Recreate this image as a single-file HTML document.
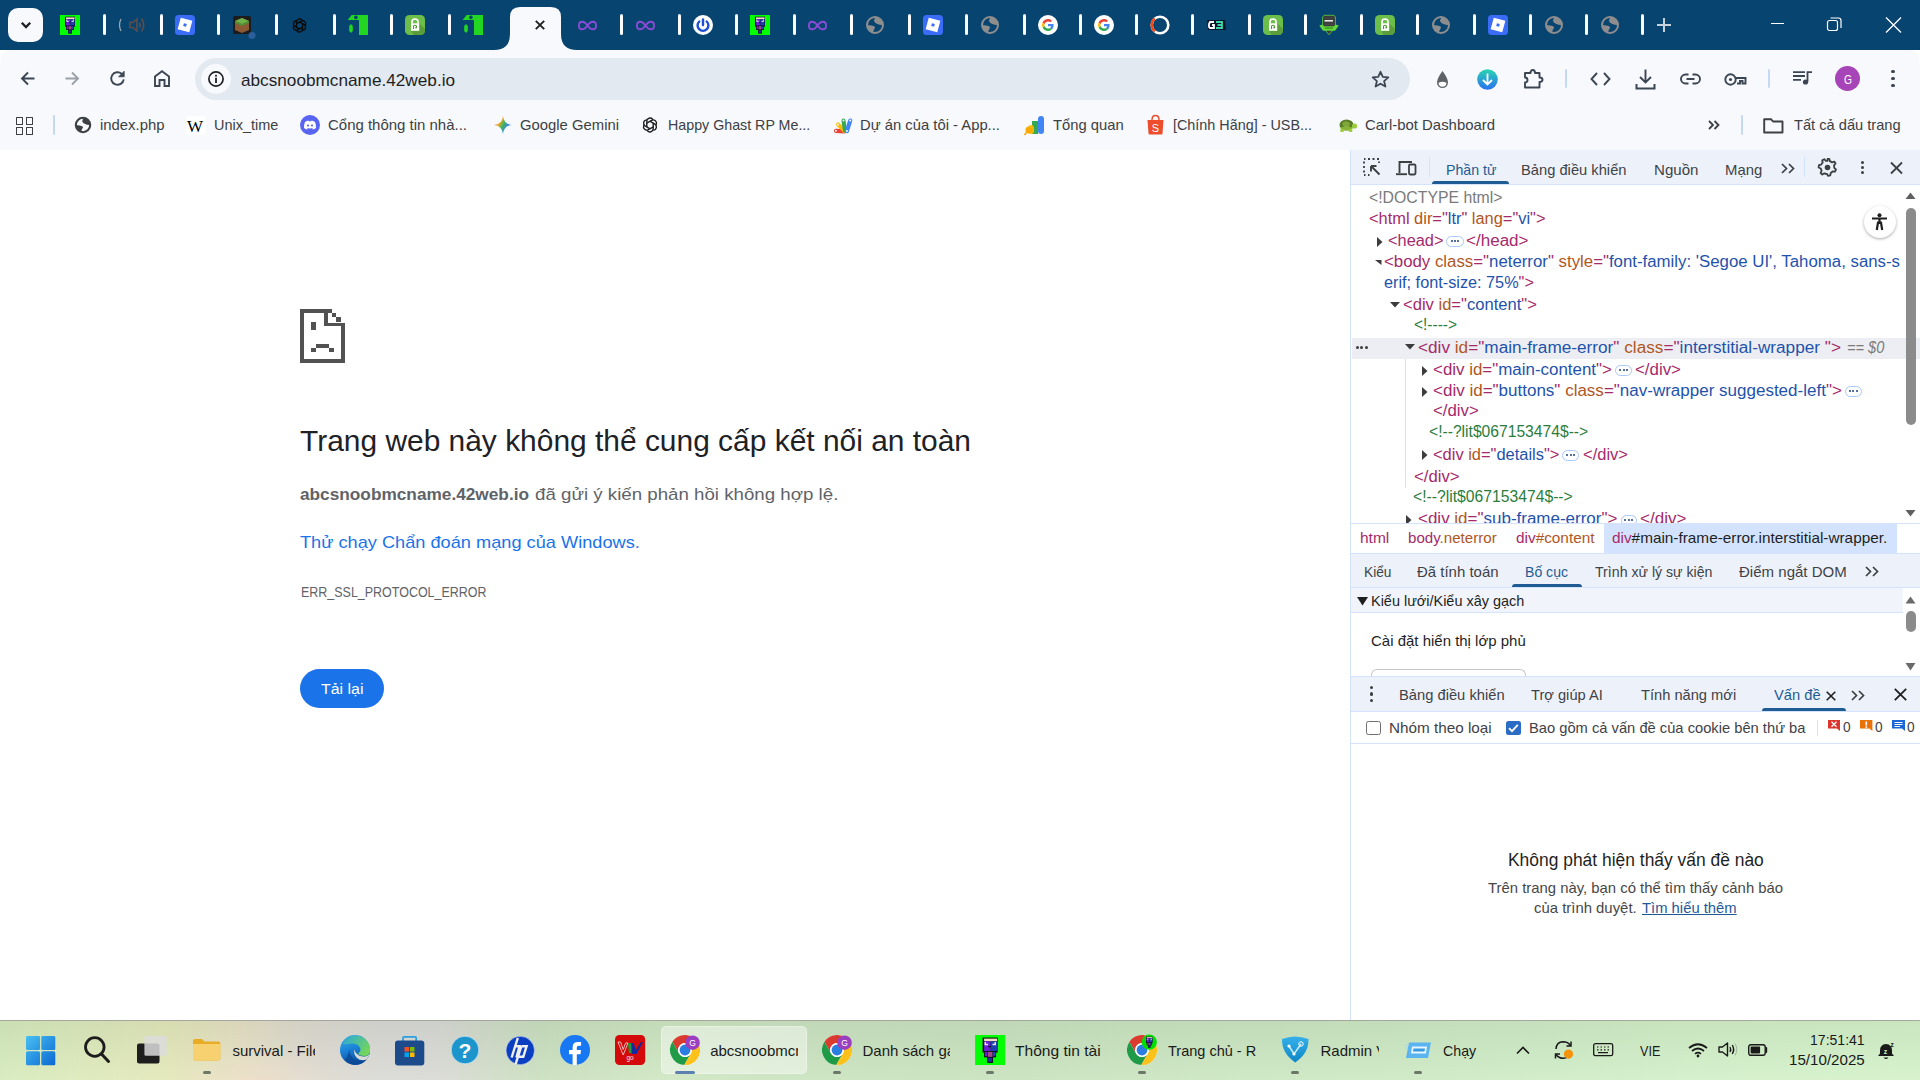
<!DOCTYPE html><html><head><meta charset="utf-8"><title>Chrome</title><style>
html,body{margin:0;padding:0;width:1920px;height:1080px;overflow:hidden;background:#fff;font-family:"Liberation Sans",sans-serif;}
.t{position:absolute;white-space:pre;line-height:1;transform-origin:0 0;}
.r{position:absolute;display:block;}
</style></head><body>
<div class="r" style="left:0px;top:0px;width:1920px;height:50px;background:#084470;"></div>
<div class="r" style="left:8px;top:8px;width:35px;height:34px;background:#f7f9fd;border-radius:10px;"></div>
<svg class="r" style="left:18px;top:17px;" width="16" height="16" viewBox="0 0 16 16"><path d="M3.8 5.8 L8 10 L12.2 5.8" fill="none" stroke="#1f1f1f" stroke-width="2.3"/></svg>
<div class="r" style="left:102.9px;top:14px;width:3px;height:21px;background:#fbfcfe;border-radius:1.5px;"></div>
<div class="r" style="left:159.9px;top:14px;width:3px;height:21px;background:#fbfcfe;border-radius:1.5px;"></div>
<div class="r" style="left:217.4px;top:14px;width:3px;height:21px;background:#fbfcfe;border-radius:1.5px;"></div>
<div class="r" style="left:274.6px;top:14px;width:3px;height:21px;background:#fbfcfe;border-radius:1.5px;"></div>
<div class="r" style="left:333.0px;top:14px;width:3px;height:21px;background:#fbfcfe;border-radius:1.5px;"></div>
<div class="r" style="left:389.9px;top:14px;width:3px;height:21px;background:#fbfcfe;border-radius:1.5px;"></div>
<div class="r" style="left:447.8px;top:14px;width:3px;height:21px;background:#fbfcfe;border-radius:1.5px;"></div>
<div class="r" style="left:620.0px;top:14px;width:3px;height:21px;background:#fbfcfe;border-radius:1.5px;"></div>
<div class="r" style="left:678.0px;top:14px;width:3px;height:21px;background:#fbfcfe;border-radius:1.5px;"></div>
<div class="r" style="left:735.0px;top:14px;width:3px;height:21px;background:#fbfcfe;border-radius:1.5px;"></div>
<div class="r" style="left:792.5px;top:14px;width:3px;height:21px;background:#fbfcfe;border-radius:1.5px;"></div>
<div class="r" style="left:849.5px;top:14px;width:3px;height:21px;background:#fbfcfe;border-radius:1.5px;"></div>
<div class="r" style="left:907.5px;top:14px;width:3px;height:21px;background:#fbfcfe;border-radius:1.5px;"></div>
<div class="r" style="left:964.5px;top:14px;width:3px;height:21px;background:#fbfcfe;border-radius:1.5px;"></div>
<div class="r" style="left:1022.5px;top:14px;width:3px;height:21px;background:#fbfcfe;border-radius:1.5px;"></div>
<div class="r" style="left:1078.5px;top:14px;width:3px;height:21px;background:#fbfcfe;border-radius:1.5px;"></div>
<div class="r" style="left:1134.5px;top:14px;width:3px;height:21px;background:#fbfcfe;border-radius:1.5px;"></div>
<div class="r" style="left:1190.5px;top:14px;width:3px;height:21px;background:#fbfcfe;border-radius:1.5px;"></div>
<div class="r" style="left:1247.5px;top:14px;width:3px;height:21px;background:#fbfcfe;border-radius:1.5px;"></div>
<div class="r" style="left:1303.5px;top:14px;width:3px;height:21px;background:#fbfcfe;border-radius:1.5px;"></div>
<div class="r" style="left:1359.5px;top:14px;width:3px;height:21px;background:#fbfcfe;border-radius:1.5px;"></div>
<div class="r" style="left:1415.5px;top:14px;width:3px;height:21px;background:#fbfcfe;border-radius:1.5px;"></div>
<div class="r" style="left:1472.5px;top:14px;width:3px;height:21px;background:#fbfcfe;border-radius:1.5px;"></div>
<div class="r" style="left:1528.5px;top:14px;width:3px;height:21px;background:#fbfcfe;border-radius:1.5px;"></div>
<div class="r" style="left:1584.5px;top:14px;width:3px;height:21px;background:#fbfcfe;border-radius:1.5px;"></div>
<div class="r" style="left:1640.5px;top:14px;width:3px;height:21px;background:#fbfcfe;border-radius:1.5px;"></div>
<svg class="r" style="left:494px;top:7px" width="84" height="43" viewBox="0 0 84 43"><path d="M0 43 Q16 43 16 27 L16 10 Q16 0 26 0 L57 0 Q67 0 67 10 L67 27 Q67 43 83 43 Z" fill="#f7f9fd"/></svg>
<svg class="r" style="left:535px;top:20px;" width="10" height="10" viewBox="0 0 10 10"><path d="M0.8 0.8 L9.2 9.2 M9.2 0.8 L0.8 9.2" stroke="#1f1f1f" stroke-width="1.9"/></svg>
<svg class="r" style="left:60.0px;top:15.0px;overflow:visible" width="20" height="20" viewBox="0 0 20 20"><rect x="0" y="0" width="20" height="20" fill="#00ff00"/><rect x="5" y="1.7" width="10" height="10" fill="#0a0618"/><rect x="6" y="2.4" width="8.6" height="1.8" fill="#f2dcc4"/><rect x="6" y="4.2" width="4.3" height="6.5" fill="#6d1fd8"/><rect x="10.3" y="4.2" width="4.3" height="6.5" fill="#1f3fb0"/><path d="M6.8 4.6 V6.4 H8.6 M11.6 6.4 H13.4 V4.6" fill="none" stroke="#e8e4d8" stroke-width="1"/><rect x="8.8" y="7.4" width="1.6" height="0.8" fill="#0a0618"/><rect x="6" y="10.7" width="8" height="4.2" fill="#0a0618"/><rect x="6.5" y="11.2" width="1.8" height="3" fill="#7020d0"/><rect x="8.6" y="11.2" width="3" height="3.5" fill="#a04a86"/><rect x="11.8" y="11.2" width="1.8" height="3" fill="#2040b8"/><rect x="8" y="14.6" width="4" height="4" fill="#0a0618"/><rect x="8.6" y="15.2" width="2.8" height="2.6" fill="#1f2f9a"/></svg>
<svg class="r" style="left:126.9px;top:15.0px;overflow:visible" width="20" height="20" viewBox="0 0 20 20"><path d="M-6 4 Q-9 10 -6 16" fill="none" stroke="#9aa5b0" stroke-width="1.3"/><path d="M3 7.5 H6 L10 4 V16 L6 12.5 H3 Z" fill="none" stroke="#5e4e4c" stroke-width="1.6"/><path d="M12.5 7.5 Q14 10 12.5 12.5" fill="#5e4e4c" stroke="#5e4e4c" stroke-width="1.5"/><path d="M14.5 3.5 Q19 10 14.5 16.5" fill="none" stroke="#5e4e4c" stroke-width="1.6"/></svg>
<svg class="r" style="left:174.9px;top:15.0px;overflow:visible" width="20" height="20" viewBox="0 0 20 20"><rect x="0" y="0" width="20" height="20" rx="3.5" fill="#3b6cf7"/><g transform="rotate(15 10 10)"><rect x="4" y="4" width="12" height="12" fill="#ffffff"/><rect x="8.5" y="8.5" width="3" height="3" fill="#3b6cf7"/></g></svg>
<svg class="r" style="left:232.4px;top:15.0px;overflow:visible" width="20" height="20" viewBox="0 0 20 20"><rect x="1" y="1" width="18" height="18" rx="1.5" fill="#1c1c1c"/><path d="M3 6 L10 3 L17 6 L17 15 L10 18 L3 15 Z" fill="#8b5a34"/><path d="M3 6 L10 3 L17 6 L10 9 Z" fill="#6db34a"/><path d="M3 6 L10 9 L10 11 L3 8 Z M17 6 L10 9 L10 11 L17 8Z" fill="#4f8f35"/><circle cx="20" cy="20.5" r="3.6" fill="#2a5f99"/></svg>
<svg class="r" style="left:290.1px;top:15.5px;overflow:visible" width="19" height="19" viewBox="0 0 20 20"><g fill="none" stroke="#0b0b0b" stroke-width="1.5" stroke-linecap="round"><path d="M6.8 11.5 V6.2 A3.3 3.3 0 0 1 12.6 4.2" transform="rotate(0 10 10)"/><path d="M6.8 11.5 V6.2 A3.3 3.3 0 0 1 12.6 4.2" transform="rotate(60 10 10)"/><path d="M6.8 11.5 V6.2 A3.3 3.3 0 0 1 12.6 4.2" transform="rotate(120 10 10)"/><path d="M6.8 11.5 V6.2 A3.3 3.3 0 0 1 12.6 4.2" transform="rotate(180 10 10)"/><path d="M6.8 11.5 V6.2 A3.3 3.3 0 0 1 12.6 4.2" transform="rotate(240 10 10)"/><path d="M6.8 11.5 V6.2 A3.3 3.3 0 0 1 12.6 4.2" transform="rotate(300 10 10)"/></g></svg>
<svg class="r" style="left:348.0px;top:15.0px;overflow:visible" width="20" height="20" viewBox="0 0 20 20"><path d="M11 0 H20 V20 H11 V5 H0 V4.6 L3.7 0 Z" fill="#22d622"/><circle cx="7.9" cy="2.4" r="1.8" fill="#084470"/><path d="M1.2 11 L3 9 L4.8 11 V16 L3 18 L1.2 16 Z" fill="#22d622"/></svg>
<svg class="r" style="left:404.9px;top:15.0px;overflow:visible" width="20" height="20" viewBox="0 0 20 20"><defs><clipPath id="lkc"><rect x="0" y="0" width="20" height="20" rx="4.5"/></clipPath></defs><rect x="0" y="0" width="20" height="20" rx="4.5" fill="#6cbd4a"/><path d="M14 8.3 L22 16 L22 22 L10 22 L6 15.8 Z" fill="#5a9e3c" clip-path="url(#lkc)"/><path d="M7 8.5 V6.8 Q7 4 10 4 Q13 4 13 6.8 V8.5" fill="none" stroke="#fff" stroke-width="1.7"/><rect x="6" y="8.3" width="8.2" height="7.5" fill="#ffffff"/><path d="M8.5 14 V11.6 Q8.5 10.3 10 10.3 Q11.5 10.3 11.5 11.6 V12.8 H10" fill="none" stroke="#4a9a30" stroke-width="1.1"/></svg>
<svg class="r" style="left:462.8px;top:15.0px;overflow:visible" width="20" height="20" viewBox="0 0 20 20"><path d="M11 0 H20 V20 H11 V5 H0 V4.6 L3.7 0 Z" fill="#22d622"/><circle cx="7.9" cy="2.4" r="1.8" fill="#084470"/><path d="M1.2 11 L3 9 L4.8 11 V16 L3 18 L1.2 16 Z" fill="#22d622"/></svg>
<svg class="r" style="left:578.0px;top:15.5px;overflow:visible" width="19" height="19" viewBox="0 0 20 20"><path d="M10 10 C8 7 6 6 4.3 6 C2.3 6 1 7.8 1 10 C1 12.2 2.3 14 4.3 14 C6 14 8 13 10 10 C12 7 14 6 15.7 6 C17.7 6 19 7.8 19 10 C19 12.2 17.7 14 15.7 14 C14 14 12 13 10 10 Z" fill="none" stroke="#8a4cd6" stroke-width="2"/></svg>
<svg class="r" style="left:635.5px;top:15.5px;overflow:visible" width="19" height="19" viewBox="0 0 20 20"><path d="M10 10 C8 7 6 6 4.3 6 C2.3 6 1 7.8 1 10 C1 12.2 2.3 14 4.3 14 C6 14 8 13 10 10 C12 7 14 6 15.7 6 C17.7 6 19 7.8 19 10 C19 12.2 17.7 14 15.7 14 C14 14 12 13 10 10 Z" fill="none" stroke="#8a4cd6" stroke-width="2"/></svg>
<svg class="r" style="left:693.0px;top:15.0px;overflow:visible" width="20" height="20" viewBox="0 0 20 20"><circle cx="10" cy="10" r="10" fill="#ffffff"/><path d="M6.3 6.5 A5.4 5.4 0 1 0 13.7 6.5" fill="none" stroke="#1a4fd6" stroke-width="2.4" stroke-linecap="round"/><path d="M10 4.5 V10" stroke="#1a4fd6" stroke-width="2.4" stroke-linecap="round"/></svg>
<svg class="r" style="left:750.0px;top:15.0px;overflow:visible" width="20" height="20" viewBox="0 0 20 20"><rect x="0" y="0" width="20" height="20" fill="#00ff00"/><rect x="5" y="1.7" width="10" height="10" fill="#0a0618"/><rect x="6" y="2.4" width="8.6" height="1.8" fill="#f2dcc4"/><rect x="6" y="4.2" width="4.3" height="6.5" fill="#6d1fd8"/><rect x="10.3" y="4.2" width="4.3" height="6.5" fill="#1f3fb0"/><path d="M6.8 4.6 V6.4 H8.6 M11.6 6.4 H13.4 V4.6" fill="none" stroke="#e8e4d8" stroke-width="1"/><rect x="8.8" y="7.4" width="1.6" height="0.8" fill="#0a0618"/><rect x="6" y="10.7" width="8" height="4.2" fill="#0a0618"/><rect x="6.5" y="11.2" width="1.8" height="3" fill="#7020d0"/><rect x="8.6" y="11.2" width="3" height="3.5" fill="#a04a86"/><rect x="11.8" y="11.2" width="1.8" height="3" fill="#2040b8"/><rect x="8" y="14.6" width="4" height="4" fill="#0a0618"/><rect x="8.6" y="15.2" width="2.8" height="2.6" fill="#1f2f9a"/></svg>
<svg class="r" style="left:808.0px;top:15.5px;overflow:visible" width="19" height="19" viewBox="0 0 20 20"><path d="M10 10 C8 7 6 6 4.3 6 C2.3 6 1 7.8 1 10 C1 12.2 2.3 14 4.3 14 C6 14 8 13 10 10 C12 7 14 6 15.7 6 C17.7 6 19 7.8 19 10 C19 12.2 17.7 14 15.7 14 C14 14 12 13 10 10 Z" fill="none" stroke="#8a4cd6" stroke-width="2"/></svg>
<svg class="r" style="left:864.5px;top:15.0px;overflow:visible" width="20" height="20" viewBox="0 0 20 20"><g transform="translate(1 1)"><circle cx="9" cy="9" r="8" fill="none" stroke="#8e8e8e" stroke-width="2"/><path d="M9.5 1.5 Q7.5 3.8 8.3 5.8 Q9.5 7.6 12 8.2 Q14 9.2 16.8 9 A8 8 0 0 0 9.5 1.5Z" fill="#8e8e8e"/><path d="M1.2 9 Q5.5 9.2 8.3 10.3 Q9.8 11.8 8.2 13.3 Q7 14.5 7.3 16.7 A8 8 0 0 1 1.2 9Z" fill="#8e8e8e"/></g></svg>
<svg class="r" style="left:922.5px;top:15.0px;overflow:visible" width="20" height="20" viewBox="0 0 20 20"><rect x="0" y="0" width="20" height="20" rx="3.5" fill="#3b6cf7"/><g transform="rotate(15 10 10)"><rect x="4" y="4" width="12" height="12" fill="#ffffff"/><rect x="8.5" y="8.5" width="3" height="3" fill="#3b6cf7"/></g></svg>
<svg class="r" style="left:979.5px;top:15.0px;overflow:visible" width="20" height="20" viewBox="0 0 20 20"><g transform="translate(1 1)"><circle cx="9" cy="9" r="8" fill="none" stroke="#8e8e8e" stroke-width="2"/><path d="M9.5 1.5 Q7.5 3.8 8.3 5.8 Q9.5 7.6 12 8.2 Q14 9.2 16.8 9 A8 8 0 0 0 9.5 1.5Z" fill="#8e8e8e"/><path d="M1.2 9 Q5.5 9.2 8.3 10.3 Q9.8 11.8 8.2 13.3 Q7 14.5 7.3 16.7 A8 8 0 0 1 1.2 9Z" fill="#8e8e8e"/></g></svg>
<svg class="r" style="left:1037.5px;top:15.0px;overflow:visible" width="20" height="20" viewBox="0 0 20 20"><circle cx="10" cy="10" r="10" fill="#ffffff"/><path d="M15.6 10.2 C15.6 9.7 15.55 9.3 15.5 8.9 H10 V11.2 H13.2 C13 12 12.6 12.6 12 13 L13.9 14.5 C15 13.5 15.6 12 15.6 10.2Z" fill="#4285f4"/><path d="M10 16 C11.6 16 13 15.4 13.9 14.5 L12 13 C11.5 13.4 10.8 13.6 10 13.6 C8.4 13.6 7.1 12.6 6.6 11.1 L4.6 12.6 C5.6 14.6 7.6 16 10 16Z" fill="#34a853"/><path d="M6.6 11.1 C6.5 10.8 6.4 10.4 6.4 10 C6.4 9.6 6.5 9.2 6.6 8.9 L4.6 7.4 C4.2 8.2 4 9.1 4 10 C4 10.9 4.2 11.8 4.6 12.6 Z" fill="#fbbc05"/><path d="M10 6.4 C10.9 6.4 11.7 6.7 12.3 7.3 L14 5.6 C13 4.6 11.6 4 10 4 C7.6 4 5.6 5.4 4.6 7.4 L6.6 8.9 C7.1 7.4 8.4 6.4 10 6.4Z" fill="#ea4335"/></svg>
<svg class="r" style="left:1093.5px;top:15.0px;overflow:visible" width="20" height="20" viewBox="0 0 20 20"><circle cx="10" cy="10" r="10" fill="#ffffff"/><path d="M15.6 10.2 C15.6 9.7 15.55 9.3 15.5 8.9 H10 V11.2 H13.2 C13 12 12.6 12.6 12 13 L13.9 14.5 C15 13.5 15.6 12 15.6 10.2Z" fill="#4285f4"/><path d="M10 16 C11.6 16 13 15.4 13.9 14.5 L12 13 C11.5 13.4 10.8 13.6 10 13.6 C8.4 13.6 7.1 12.6 6.6 11.1 L4.6 12.6 C5.6 14.6 7.6 16 10 16Z" fill="#34a853"/><path d="M6.6 11.1 C6.5 10.8 6.4 10.4 6.4 10 C6.4 9.6 6.5 9.2 6.6 8.9 L4.6 7.4 C4.2 8.2 4 9.1 4 10 C4 10.9 4.2 11.8 4.6 12.6 Z" fill="#fbbc05"/><path d="M10 6.4 C10.9 6.4 11.7 6.7 12.3 7.3 L14 5.6 C13 4.6 11.6 4 10 4 C7.6 4 5.6 5.4 4.6 7.4 L6.6 8.9 C7.1 7.4 8.4 6.4 10 6.4Z" fill="#ea4335"/></svg>
<svg class="r" style="left:1149.5px;top:15.0px;overflow:visible" width="20" height="20" viewBox="0 0 20 20"><circle cx="10" cy="10" r="8.3" fill="none" stroke="#ffffff" stroke-width="2.6"/><path d="M4.8 3.6 A8.3 8.3 0 0 0 4.8 16.4" fill="none" stroke="#f24b1a" stroke-width="2.6"/></svg>
<svg class="r" style="left:1205.5px;top:15.0px;overflow:visible" width="20" height="20" viewBox="0 0 20 20"><path d="M1 5 L19 5 L20 15 L2 15 Z" fill="#0d1530"/><path d="M8 7 H4 L3 9 V12 L4 13 H8 V10 H6" fill="none" stroke="#fff" stroke-width="1.8"/><path d="M10 7 H16 V13 H10 M11.5 10 H16" fill="none" stroke="#3dd6a6" stroke-width="1.8"/></svg>
<svg class="r" style="left:1262.5px;top:15.0px;overflow:visible" width="20" height="20" viewBox="0 0 20 20"><defs><clipPath id="lkc"><rect x="0" y="0" width="20" height="20" rx="4.5"/></clipPath></defs><rect x="0" y="0" width="20" height="20" rx="4.5" fill="#6cbd4a"/><path d="M14 8.3 L22 16 L22 22 L10 22 L6 15.8 Z" fill="#5a9e3c" clip-path="url(#lkc)"/><path d="M7 8.5 V6.8 Q7 4 10 4 Q13 4 13 6.8 V8.5" fill="none" stroke="#fff" stroke-width="1.7"/><rect x="6" y="8.3" width="8.2" height="7.5" fill="#ffffff"/><path d="M8.5 14 V11.6 Q8.5 10.3 10 10.3 Q11.5 10.3 11.5 11.6 V12.8 H10" fill="none" stroke="#4a9a30" stroke-width="1.1"/></svg>
<svg class="r" style="left:1318.5px;top:15.0px;overflow:visible" width="20" height="20" viewBox="0 0 20 20"><path d="M3.6 2 L5 0.3 H15 L16.4 2 V12 L10 19.7 L3.6 12 Z" fill="#3a3a3c" stroke="#5ad43a" stroke-width="0.8"/><rect x="5.5" y="5" width="8.5" height="1.6" fill="#e8e8e8"/><path d="M5 3 H15 M5 8 H15 M5 9.5 H15" stroke="#555" stroke-width="0.5"/><path d="M0.3 10.5 L3.6 9.5 L5 11.3 H15 L16.4 9.5 L19.7 10.5 L18 13 L16 15.8 H4 L2 13 Z" fill="#62d83a"/><rect x="6" y="12.2" width="8" height="1.6" fill="#2a7a1a" opacity="0.6"/></svg>
<svg class="r" style="left:1374.5px;top:15.0px;overflow:visible" width="20" height="20" viewBox="0 0 20 20"><defs><clipPath id="lkc"><rect x="0" y="0" width="20" height="20" rx="4.5"/></clipPath></defs><rect x="0" y="0" width="20" height="20" rx="4.5" fill="#6cbd4a"/><path d="M14 8.3 L22 16 L22 22 L10 22 L6 15.8 Z" fill="#5a9e3c" clip-path="url(#lkc)"/><path d="M7 8.5 V6.8 Q7 4 10 4 Q13 4 13 6.8 V8.5" fill="none" stroke="#fff" stroke-width="1.7"/><rect x="6" y="8.3" width="8.2" height="7.5" fill="#ffffff"/><path d="M8.5 14 V11.6 Q8.5 10.3 10 10.3 Q11.5 10.3 11.5 11.6 V12.8 H10" fill="none" stroke="#4a9a30" stroke-width="1.1"/></svg>
<svg class="r" style="left:1430.5px;top:15.0px;overflow:visible" width="20" height="20" viewBox="0 0 20 20"><g transform="translate(1 1)"><circle cx="9" cy="9" r="8" fill="none" stroke="#8e8e8e" stroke-width="2"/><path d="M9.5 1.5 Q7.5 3.8 8.3 5.8 Q9.5 7.6 12 8.2 Q14 9.2 16.8 9 A8 8 0 0 0 9.5 1.5Z" fill="#8e8e8e"/><path d="M1.2 9 Q5.5 9.2 8.3 10.3 Q9.8 11.8 8.2 13.3 Q7 14.5 7.3 16.7 A8 8 0 0 1 1.2 9Z" fill="#8e8e8e"/></g></svg>
<svg class="r" style="left:1487.5px;top:15.0px;overflow:visible" width="20" height="20" viewBox="0 0 20 20"><rect x="0" y="0" width="20" height="20" rx="3.5" fill="#3b6cf7"/><g transform="rotate(15 10 10)"><rect x="4" y="4" width="12" height="12" fill="#ffffff"/><rect x="8.5" y="8.5" width="3" height="3" fill="#3b6cf7"/></g></svg>
<svg class="r" style="left:1543.5px;top:15.0px;overflow:visible" width="20" height="20" viewBox="0 0 20 20"><g transform="translate(1 1)"><circle cx="9" cy="9" r="8" fill="none" stroke="#8e8e8e" stroke-width="2"/><path d="M9.5 1.5 Q7.5 3.8 8.3 5.8 Q9.5 7.6 12 8.2 Q14 9.2 16.8 9 A8 8 0 0 0 9.5 1.5Z" fill="#8e8e8e"/><path d="M1.2 9 Q5.5 9.2 8.3 10.3 Q9.8 11.8 8.2 13.3 Q7 14.5 7.3 16.7 A8 8 0 0 1 1.2 9Z" fill="#8e8e8e"/></g></svg>
<svg class="r" style="left:1599.5px;top:15.0px;overflow:visible" width="20" height="20" viewBox="0 0 20 20"><g transform="translate(1 1)"><circle cx="9" cy="9" r="8" fill="none" stroke="#8e8e8e" stroke-width="2"/><path d="M9.5 1.5 Q7.5 3.8 8.3 5.8 Q9.5 7.6 12 8.2 Q14 9.2 16.8 9 A8 8 0 0 0 9.5 1.5Z" fill="#8e8e8e"/><path d="M1.2 9 Q5.5 9.2 8.3 10.3 Q9.8 11.8 8.2 13.3 Q7 14.5 7.3 16.7 A8 8 0 0 1 1.2 9Z" fill="#8e8e8e"/></g></svg>
<svg class="r" style="left:1656px;top:17px;" width="16" height="16" viewBox="0 0 16 16"><path d="M8 1 V15 M1 8 H15" stroke="#c9d1db" stroke-width="2"/></svg>
<div class="r" style="left:1771px;top:23px;width:13px;height:1.3px;background:#ffffff;"></div>
<svg class="r" style="left:1826px;top:16px;" width="18" height="18" viewBox="0 0 18 18"><rect x="1.5" y="4.5" width="10" height="10" rx="2" fill="none" stroke="#fff" stroke-width="1.2"/><path d="M4.5 2 H12.5 Q15 2 15 4.5 V12" fill="none" stroke="#fff" stroke-width="1.2"/></svg>
<svg class="r" style="left:1884px;top:16px;" width="20" height="18" viewBox="0 0 20 18"><path d="M2 1.5 L17 16.5 M17 1.5 L2 16.5" stroke="#fff" stroke-width="1.3"/></svg>
<div class="r" style="left:0px;top:50px;width:1920px;height:100px;background:#f7f9fd;border-radius:10px 10px 0 0;"></div>
<div class="r" style="left:0px;top:150px;width:1920px;height:1px;background:#dde1e8;"></div>
<svg class="r" style="left:20px;top:71px;overflow:visible" width="15" height="15" viewBox="0 0 15 15"><path d="M14.5 7.5 H2 M8 1.5 L2 7.5 L8 13.5" fill="none" stroke="#3c4653" stroke-width="1.9"/></svg>
<svg class="r" style="left:65px;top:71px;overflow:visible" width="15" height="15" viewBox="0 0 15 15"><path d="M0.5 7.5 H13 M7 1.5 L13 7.5 L7 13.5" fill="none" stroke="#9ba1a8" stroke-width="1.9"/></svg>
<svg class="r" style="left:110px;top:71px;overflow:visible" width="16" height="16" viewBox="0 0 16 16"><path d="M11.80 2.89 A6.3 6.3 0 1 0 13.74 8.38" fill="none" stroke="#3c4653" stroke-width="1.9"/><path d="M14.2 0.2 V5.8 H8.6 Z" fill="#3c4653" stroke="#3c4653" stroke-width="0.8" stroke-linejoin="round"/></svg>
<svg class="r" style="left:154px;top:70px;overflow:visible" width="16" height="17" viewBox="0 0 16 17"><path d="M1 16 V6.5 L8 1.2 L15 6.5 V16 H10.5 V10 H5.5 V16 Z" fill="none" stroke="#3c4653" stroke-width="1.9" stroke-linejoin="miter"/></svg>
<div class="r" style="left:195px;top:58px;width:1215px;height:42px;background:#e2e9f1;border-radius:21px;"></div>
<div class="r" style="left:201px;top:64px;width:30px;height:30px;background:#f7f9fd;border-radius:15px;"></div>
<svg class="r" style="left:208px;top:71px;overflow:visible" width="16" height="16" viewBox="0 0 16 16"><circle cx="8" cy="8" r="7.1" fill="none" stroke="#1f1f1f" stroke-width="1.7"/><rect x="7.1" y="6.7" width="1.8" height="5.3" fill="#1f1f1f"/><rect x="7.1" y="3.8" width="1.8" height="1.8" fill="#1f1f1f"/></svg>
<div class="t" style="left:241px;top:72.00px;font-size:17px;color:#1f1f1f;font-weight:400;font-style:normal;transform:scaleX(1.0111);">abcsnoobmcname.42web.io</div>
<svg class="r" style="left:1371px;top:70px;overflow:visible" width="19" height="18" viewBox="0 0 19 18"><path d="M9.5 1.8 L11.8 6.9 L17.3 7.4 L13.1 11.1 L14.4 16.5 L9.5 13.7 L4.6 16.5 L5.9 11.1 L1.7 7.4 L7.2 6.9 Z" fill="none" stroke="#3c4653" stroke-width="1.8" stroke-linejoin="round"/></svg>
<svg class="r" style="left:1436px;top:70px;overflow:visible" width="13" height="19" viewBox="0 0 13 19"><path d="M6.5 1 Q12 8.5 12 12.5 A5.5 5.5 0 0 1 1 12.5 Q1 8.5 6.5 1Z" fill="#5f6368"/><path d="M2.6 12.8 Q6.5 10.5 10.4 12.8 A3.9 3.9 0 0 1 2.6 12.8Z" fill="#ffffff"/></svg>
<svg class="r" style="left:1477px;top:69px;overflow:visible" width="21" height="21" viewBox="0 0 21 21"><defs><linearGradient id="bg1" x1="0" y1="0" x2="0" y2="1"><stop offset="0" stop-color="#2ad6b0"/><stop offset="1" stop-color="#2b6ff2"/></linearGradient></defs><circle cx="10.5" cy="10.5" r="10.3" fill="url(#bg1)"/><path d="M10.5 4.5 V15.5 M6 11 L10.5 15.5 L15 11" fill="none" stroke="#fff" stroke-width="1.8"/></svg>
<svg class="r" style="left:1523px;top:68px;overflow:visible" width="21" height="21" viewBox="0 0 21 21"><path d="M2 5 H7.5 Q7.5 2 9.8 2 Q12 2 12 5 H16.5 V9.5 Q19.5 9.5 19.5 11.8 Q19.5 14 16.5 14 V19.5 H2 V14.5 Q4.5 14.5 4.5 12 Q4.5 9.5 2 9.5 Z" fill="none" stroke="#3c4653" stroke-width="1.9" stroke-linejoin="round"/></svg>
<div class="r" style="left:1565px;top:69px;width:2px;height:19px;background:#c6d9f4;border-radius:1px;"></div>
<svg class="r" style="left:1590px;top:72px;overflow:visible" width="21" height="14" viewBox="0 0 21 14"><path d="M7 1 L1.5 7 L7 13 M14 1 L19.5 7 L14 13" fill="none" stroke="#3c4653" stroke-width="1.9"/></svg>
<svg class="r" style="left:1635px;top:69px;overflow:visible" width="21" height="21" viewBox="0 0 21 21"><path d="M10.5 0.5 V13 M5 8 L10.5 13.5 L16 8" fill="none" stroke="#3c4653" stroke-width="1.9"/><path d="M1.5 15 V19.5 H19.5 V15" fill="none" stroke="#3c4653" stroke-width="2"/></svg>
<svg class="r" style="left:1680px;top:73px;overflow:visible" width="21" height="12" viewBox="0 0 21 12"><path d="M8.5 1.5 H5.5 A4.5 4.5 0 0 0 5.5 10.5 H8.5 M12.5 1.5 H15.5 A4.5 4.5 0 0 1 15.5 10.5 H12.5 M6.5 6 H14.5" fill="none" stroke="#3c4653" stroke-width="1.9"/></svg>
<svg class="r" style="left:1724px;top:72px;overflow:visible" width="23" height="15" viewBox="0 0 23 15"><circle cx="6.5" cy="7.5" r="5.2" fill="none" stroke="#3c4653" stroke-width="1.9"/><circle cx="6.5" cy="7.5" r="1.6" fill="#3c4653"/><path d="M11.5 6 H21.5 V11.5 H18.5 V9 H16 V11.5 H13" fill="none" stroke="#3c4653" stroke-width="1.9"/></svg>
<div class="r" style="left:1768px;top:69px;width:2px;height:19px;background:#c6d9f4;border-radius:1px;"></div>
<svg class="r" style="left:1793px;top:71px;overflow:visible" width="20" height="14" viewBox="0 0 20 14"><path d="M0 1.2 H12 M0 5 H12 M0 8.8 H8" stroke="#3c4653" stroke-width="1.8"/><path d="M14.5 11 V1.2 H19" fill="none" stroke="#3c4653" stroke-width="1.8"/><circle cx="12.5" cy="11" r="2.6" fill="#3c4653"/></svg>
<div class="r" style="left:1835px;top:66px;width:25px;height:25px;background:#a744b7;border-radius:50%;"></div>
<div class="t" style="left:1843.6px;top:74.00px;font-size:12px;color:#ffffff;font-weight:400;font-style:normal;transform:scaleX(0.8576);">G</div>
<div class="r" style="left:1891px;top:69.7px;width:3.6px;height:3.6px;background:#3c4653;border-radius:50%;"></div>
<div class="r" style="left:1891px;top:76.7px;width:3.6px;height:3.6px;background:#3c4653;border-radius:50%;"></div>
<div class="r" style="left:1891px;top:83.7px;width:3.6px;height:3.6px;background:#3c4653;border-radius:50%;"></div>
<div class="r" style="left:15.6px;top:117.0px;width:7.6px;height:7.6px;background:transparent;border:1.9px solid #3c4043;box-sizing:border-box;border-radius:0.5px;"></div>
<div class="r" style="left:15.6px;top:127.3px;width:7.6px;height:7.6px;background:transparent;border:1.9px solid #3c4043;box-sizing:border-box;border-radius:0.5px;"></div>
<div class="r" style="left:25.9px;top:117.0px;width:7.6px;height:7.6px;background:transparent;border:1.9px solid #3c4043;box-sizing:border-box;border-radius:0.5px;"></div>
<div class="r" style="left:25.9px;top:127.3px;width:7.6px;height:7.6px;background:transparent;border:1.9px solid #3c4043;box-sizing:border-box;border-radius:0.5px;"></div>
<div class="r" style="left:53px;top:115px;width:2px;height:20px;background:#c6d9f4;border-radius:1px;"></div>
<svg class="r" style="left:74px;top:116px;overflow:visible" width="18" height="18" viewBox="0 0 20 20"><g transform="translate(1 1)"><circle cx="9" cy="9" r="8" fill="none" stroke="#3c4043" stroke-width="2.3"/><path d="M9.5 1.5 Q7.5 3.8 8.3 5.8 Q9.5 7.6 12 8.2 Q14 9.2 16.8 9 A8 8 0 0 0 9.5 1.5Z" fill="#3c4043"/><path d="M1.2 9 Q5.5 9.2 8.3 10.3 Q9.8 11.8 8.2 13.3 Q7 14.5 7.3 16.7 A8 8 0 0 1 1.2 9Z" fill="#3c4043"/></g></svg>
<div class="r" style="left:186px;top:116px;width:20px;height:19px;background:#ffffff;border-radius:3px;"></div>
<div class="t" style="left:187px;top:117.8px;font-family:'Liberation Serif',serif;font-size:17px;color:#000;">W</div>
<svg class="r" style="left:300px;top:115px;overflow:visible" width="20" height="20" viewBox="0 0 20 20"><circle cx="10" cy="10" r="10" fill="#5865f2"/><path d="M5 7 Q7 5.5 8.3 5.5 L8.8 6.3 Q10 6.1 11.2 6.3 L11.7 5.5 Q13 5.5 15 7 Q16.3 10 16 13 Q14.5 14.3 12.8 14.5 L12.2 13.5 Q13 13.2 13.5 12.8 Q10 14.3 6.5 12.8 Q7 13.2 7.8 13.5 L7.2 14.5 Q5.5 14.3 4 13 Q3.7 10 5 7Z" fill="#fff"/><circle cx="8" cy="10.5" r="1.1" fill="#5865f2"/><circle cx="12" cy="10.5" r="1.1" fill="#5865f2"/></svg>
<svg class="r" style="left:493px;top:115px;overflow:visible" width="20" height="20" viewBox="0 0 20 20"><defs><linearGradient id="gm" x1="0" y1="0.2" x2="1" y2="0.8"><stop offset="0" stop-color="#f0483e"/><stop offset="0.3" stop-color="#f5a623"/><stop offset="0.5" stop-color="#3cb660"/><stop offset="0.75" stop-color="#3f7cf4"/><stop offset="1" stop-color="#4a6cf0"/></linearGradient></defs><path d="M10 1 Q10.8 9.2 19 10 Q10.8 10.8 10 19 Q9.2 10.8 1 10 Q9.2 9.2 10 1Z" fill="url(#gm)"/></svg>
<svg class="r" style="left:640px;top:115px;overflow:visible" width="20" height="20" viewBox="0 0 20 20"><g fill="none" stroke="#1f1f1f" stroke-width="1.4" stroke-linecap="round"><path d="M6.8 11.5 V6.2 A3.3 3.3 0 0 1 12.6 4.2" transform="rotate(0 10 10)"/><path d="M6.8 11.5 V6.2 A3.3 3.3 0 0 1 12.6 4.2" transform="rotate(60 10 10)"/><path d="M6.8 11.5 V6.2 A3.3 3.3 0 0 1 12.6 4.2" transform="rotate(120 10 10)"/><path d="M6.8 11.5 V6.2 A3.3 3.3 0 0 1 12.6 4.2" transform="rotate(180 10 10)"/><path d="M6.8 11.5 V6.2 A3.3 3.3 0 0 1 12.6 4.2" transform="rotate(240 10 10)"/><path d="M6.8 11.5 V6.2 A3.3 3.3 0 0 1 12.6 4.2" transform="rotate(300 10 10)"/></g></svg>
<svg class="r" style="left:828px;top:110px;overflow:visible" width="30" height="30" viewBox="0 0 30 30"><g stroke-linecap="round"><path d="M8 20.8 L16.5 21.3" stroke="#ea4335" stroke-width="4.2"/><path d="M10 14.4 L16.6 21" stroke="#fbbc04" stroke-width="4"/><path d="M15.5 10.6 L16.9 20.6" stroke="#34a853" stroke-width="4"/><path d="M22.2 10.6 L18.9 21.1" stroke="#4285f4" stroke-width="4.2"/></g><g fill="#fff"><circle cx="7.9" cy="20.8" r="1"/><circle cx="10" cy="14.4" r="1"/><circle cx="15.5" cy="10.6" r="1"/><circle cx="22.2" cy="10.6" r="1"/><circle cx="18.9" cy="21" r="1"/></g></svg>
<svg class="r" style="left:1024px;top:115px;overflow:visible" width="21" height="21" viewBox="0 0 21 21"><rect x="14" y="1" width="6" height="18" rx="3" fill="#4285f4"/><rect x="8" y="6" width="6" height="13" fill="#34a853"/><rect x="4" y="10" width="6" height="9" rx="3" fill="#fbbc04" opacity="0.9"/><circle cx="5" cy="15" r="3.5" fill="#f9ab00"/><path d="M2.5 17.5 L0.5 20" stroke="#f9ab00" stroke-width="1.6"/></svg>
<svg class="r" style="left:1146px;top:114px;overflow:visible" width="19" height="21" viewBox="0 0 19 21"><path d="M1.5 6 H17.5 L16.5 19.5 Q16.4 20.5 15.3 20.5 H3.7 Q2.6 20.5 2.5 19.5 Z" fill="#ee4d2d"/><path d="M6 6 Q6 1.5 9.5 1.5 Q13 1.5 13 6" fill="none" stroke="#ee4d2d" stroke-width="1.5"/><text x="9.5" y="17.5" font-family="Liberation Sans" font-size="11" fill="#fff" text-anchor="middle">S</text></svg>
<svg class="r" style="left:1337px;top:116px;overflow:visible" width="21" height="18" viewBox="0 0 21 18"><ellipse cx="9.5" cy="9" rx="7" ry="5.5" fill="#5a7d2a"/><path d="M5 7 L9 5 L13 7 L12 11 L7 11Z" fill="#7fa83a"/><circle cx="17.5" cy="10" r="2.6" fill="#9acb3c"/><ellipse cx="5" cy="14.5" rx="2" ry="1.6" fill="#9acb3c"/><ellipse cx="13.5" cy="14.5" rx="2" ry="1.6" fill="#9acb3c"/><ellipse cx="9.5" cy="12.5" rx="6.5" ry="2" fill="#9acb3c" opacity="0.7"/></svg>
<svg class="r" style="left:1708px;top:120px;overflow:visible" width="12" height="10" viewBox="0 0 12 10"><path d="M1 1 L5 5 L1 9 M6.5 1 L10.5 5 L6.5 9" fill="none" stroke="#3c4043" stroke-width="1.8"/></svg>
<div class="r" style="left:1741px;top:115px;width:2px;height:20px;background:#c6d9f4;border-radius:1px;"></div>
<svg class="r" style="left:1763px;top:118px;overflow:visible" width="21" height="16" viewBox="0 0 21 16"><path d="M1.2 1.2 H8 L10 3.5 H19.5 V14.5 H1.2 Z" fill="none" stroke="#3c4043" stroke-width="1.9" stroke-linejoin="round"/></svg>
<div class="t" style="left:100.2px;top:117.00px;font-size:15px;color:#3d3f43;font-weight:400;font-style:normal;transform:scaleX(0.9914);">index.php</div>
<div class="t" style="left:214.2px;top:117.00px;font-size:15px;color:#3d3f43;font-weight:400;font-style:normal;transform:scaleX(0.9642);">Unix_time</div>
<div class="t" style="left:327.7px;top:117.00px;font-size:15px;color:#3d3f43;font-weight:400;font-style:normal;transform:scaleX(0.9978);">Cổng thông tin nhà...</div>
<div class="t" style="left:520px;top:117.00px;font-size:15px;color:#3d3f43;font-weight:400;font-style:normal;transform:scaleX(0.9894);">Google Gemini</div>
<div class="t" style="left:667.7px;top:117.00px;font-size:15px;color:#3d3f43;font-weight:400;font-style:normal;transform:scaleX(0.9498);">Happy Ghast RP Me...</div>
<div class="t" style="left:860px;top:117.00px;font-size:15px;color:#3d3f43;font-weight:400;font-style:normal;transform:scaleX(0.9871);">Dự án của tôi - App...</div>
<div class="t" style="left:1052.7px;top:117.00px;font-size:15px;color:#3d3f43;font-weight:400;font-style:normal;transform:scaleX(0.9842);">Tổng quan</div>
<div class="t" style="left:1172.7px;top:117.00px;font-size:15px;color:#3d3f43;font-weight:400;font-style:normal;transform:scaleX(0.9580);">[Chính Hãng] - USB...</div>
<div class="t" style="left:1365px;top:117.00px;font-size:15px;color:#3d3f43;font-weight:400;font-style:normal;transform:scaleX(0.9930);">Carl-bot Dashboard</div>
<div class="t" style="left:1794px;top:117.00px;font-size:15px;color:#3d3f43;font-weight:400;font-style:normal;transform:scaleX(0.9765);">Tất cả dấu trang</div>
<div class="r" style="left:0px;top:150px;width:1350px;height:870px;background:#ffffff;"></div>
<div class="r" style="left:300px;top:308.6px;width:4.2px;height:54.4px;background:#525252;"></div>
<div class="r" style="left:300px;top:359px;width:45px;height:4px;background:#525252;"></div>
<div class="r" style="left:300px;top:308.6px;width:31.6px;height:4.2px;background:#525252;"></div>
<div class="r" style="left:323.75px;top:308.6px;width:3.9px;height:17.6px;background:#525252;"></div>
<div class="r" style="left:323.75px;top:322.5px;width:21.25px;height:3.9px;background:#525252;"></div>
<div class="r" style="left:331.6px;top:312.75px;width:4.4px;height:4.5px;background:#525252;"></div>
<div class="r" style="left:336px;top:317.2px;width:4.6px;height:5.3px;background:#525252;"></div>
<div class="r" style="left:340.8px;top:322.5px;width:4.2px;height:40.5px;background:#525252;"></div>
<div class="r" style="left:311.2px;top:322.1px;width:4.5px;height:7.9px;background:#525252;"></div>
<div class="r" style="left:315.7px;top:343.7px;width:13.7px;height:4.1px;background:#525252;"></div>
<div class="r" style="left:311.2px;top:347.8px;width:4.5px;height:4.2px;background:#525252;"></div>
<div class="r" style="left:329.4px;top:347.8px;width:4.6px;height:4.2px;background:#525252;"></div>
<div class="t" style="left:300px;top:426.00px;font-size:30px;color:#202124;font-weight:400;font-style:normal;transform:scaleX(0.9975);">Trang web này không thể cung cấp kết nối an toàn</div>
<div class="t" style="left:300.2px;top:486.00px;font-size:17px;color:#5f6368;font-weight:700;font-style:normal;transform:scaleX(1.0142);">abcsnoobmcname.42web.io</div>
<div class="t" style="left:535px;top:486.00px;font-size:17px;color:#5f6368;font-weight:400;font-style:normal;transform:scaleX(1.0998);">đã gửi ý kiến phản hồi không hợp lệ.</div>
<div class="t" style="left:300.2px;top:534.00px;font-size:17px;color:#1a73e8;font-weight:400;font-style:normal;transform:scaleX(1.0702);">Thử chạy Chẩn đoán mạng của Windows.</div>
<div class="t" style="left:300.5px;top:584.00px;font-size:15px;color:#5f6368;font-weight:400;font-style:normal;transform:scaleX(0.8315);">ERR_SSL_PROTOCOL_ERROR</div>
<div class="r" style="left:300px;top:669px;width:84px;height:39px;background:#1a73e8;border-radius:19.5px;"></div>
<div class="t" style="left:321px;top:681.00px;font-size:15.5px;color:#ffffff;font-weight:400;font-style:normal;transform:scaleX(1.0280);">Tải lại</div>
<div class="r" style="left:1350px;top:150px;width:570px;height:870px;background:#ffffff;"></div>
<div class="r" style="left:1350px;top:150px;width:1px;height:870px;background:#d3e3fd;"></div>
<div class="r" style="left:1351px;top:150px;width:569px;height:34px;background:#edf2fa;"></div>
<div class="r" style="left:1351px;top:184px;width:569px;height:1px;background:#d3e3fd;"></div>
<svg class="r" style="left:1363px;top:158px;overflow:visible" width="18" height="18" viewBox="0 0 18 18"><path d="M1 1 H2.5 M5 1 H7 M9.5 1 H11.5 M14 1 H16 M1 3.5 V5.5 M1 8 V10 M1 12.5 V14.5 M1 17 H2.5 M5 17 H6.5 M16 3.5 V5" stroke="#3c4043" stroke-width="1.8"/><path d="M8 8 L16.5 16.5 M8 8 H13.5 M8 8 V13.5" fill="none" stroke="#3c4043" stroke-width="1.9"/></svg>
<svg class="r" style="left:1396px;top:160px;overflow:visible" width="21" height="16" viewBox="0 0 21 16"><path d="M3.5 13 V2 H16" fill="none" stroke="#3c4043" stroke-width="1.9"/><path d="M0 14.2 H11" stroke="#3c4043" stroke-width="1.9"/><rect x="13" y="4.5" width="6.5" height="10" rx="1.2" fill="none" stroke="#3c4043" stroke-width="1.8"/></svg>
<div class="r" style="left:1428.5px;top:157px;width:1.2px;height:20px;background:#d3e3fd;"></div>
<div class="t" style="left:1445.6px;top:162.00px;font-size:15px;color:#1f5c94;font-weight:400;font-style:normal;transform:scaleX(0.9453);">Phần tử</div>
<div class="r" style="left:1432px;top:181px;width:77px;height:3px;background:#1f5c94;border-radius:3px 3px 0 0;"></div>
<div class="t" style="left:1521.4px;top:162.00px;font-size:15px;color:#3f4247;font-weight:400;font-style:normal;transform:scaleX(0.9805);">Bảng điều khiển</div>
<div class="t" style="left:1654.2px;top:162.00px;font-size:15px;color:#3f4247;font-weight:400;font-style:normal;transform:scaleX(1.0045);">Nguồn</div>
<div class="t" style="left:1725.3px;top:162.00px;font-size:15px;color:#3f4247;font-weight:400;font-style:normal;transform:scaleX(0.9912);">Mạng</div>
<svg class="r" style="left:1781px;top:163px;overflow:visible" width="15" height="11" viewBox="0 0 15 11"><path d="M1 1 L5.5 5.5 L1 10 M8 1 L12.5 5.5 L8 10" fill="none" stroke="#3c4043" stroke-width="1.7"/></svg>
<div class="r" style="left:1804px;top:157px;width:1.2px;height:20px;background:#d3e3fd;"></div>
<svg class="r" style="left:1818px;top:158px;overflow:visible" width="19" height="19" viewBox="0 0 19 19"><path d="M9.5 0.8 L11.3 0.8 L11.8 3.2 Q13 3.7 14 4.4 L16.3 3.6 L17.6 5.5 L16 7.4 Q16.3 8.5 16.2 9.9 L18 11.5 L17 13.6 L14.6 13.4 Q13.8 14.4 12.7 15 L12.3 17.4 L10 17.9 L8.8 15.8 Q7.5 15.8 6.3 15.3 L4.3 16.6 L2.6 15 L3.6 12.8 Q3 11.7 2.8 10.5 L0.6 9.5 L0.9 7.2 L3.2 6.7 Q3.8 5.5 4.7 4.7 L4.2 2.3 L6.3 1.2 L7.9 3 Q8.6 2.8 9.5 2.8 Z" fill="none" stroke="#3c4043" stroke-width="1.8" stroke-linejoin="round"/><circle cx="9.5" cy="9.5" r="2.8" fill="#3c4043"/></svg>
<div class="r" style="left:1861px;top:160.9px;width:3.2px;height:3.2px;background:#3c4043;border-radius:50%;"></div>
<div class="r" style="left:1861px;top:165.9px;width:3.2px;height:3.2px;background:#3c4043;border-radius:50%;"></div>
<div class="r" style="left:1861px;top:170.9px;width:3.2px;height:3.2px;background:#3c4043;border-radius:50%;"></div>
<svg class="r" style="left:1890px;top:162px;overflow:visible" width="13" height="12" viewBox="0 0 13 12"><path d="M1 0.5 L12 11.5 M12 0.5 L1 11.5" stroke="#3c4043" stroke-width="1.8"/></svg>
<div class="t" style="left:1368.75px;top:190.00px;font-size:16px;transform:scaleX(0.9877);"><span style="color:#7a7a7a;">&lt;!DOCTYPE html&gt;</span></div>
<div class="t" style="left:1368.75px;top:211.00px;font-size:16px;transform:scaleX(1.0249);"><span style="color:#a52a6b;">&lt;html</span><span style="color:#b0561f;"> dir</span><span style="color:#a52a6b;">=&quot;</span><span style="color:#1f52ac;">ltr</span><span style="color:#a52a6b;">&quot;</span><span style="color:#b0561f;"> lang</span><span style="color:#a52a6b;">=&quot;</span><span style="color:#1f52ac;">vi</span><span style="color:#a52a6b;">&quot;&gt;</span></div>
<svg class="r" style="left:1377px;top:236.5px;overflow:visible" width="6" height="10" viewBox="0 0 6 10"><path d="M0 0 L5.5 5 L0 10 Z" fill="#3c3c3c"/></svg>
<div class="t" style="left:1387.5px;top:233.00px;font-size:16px;transform:scaleX(1.0219);"><span style="color:#a52a6b;">&lt;head&gt;</span></div>
<div class="r" style="left:1446px;top:235.5px;width:17.75px;height:11px;box-sizing:border-box;border:1px solid #a8c7fa;border-radius:6px;background:#fff;"></div>
<div class="r" style="left:1450.575px;top:240px;width:2px;height:2px;background:#1f3f7f;border-radius:50%;"></div>
<div class="r" style="left:1453.875px;top:240px;width:2px;height:2px;background:#1f3f7f;border-radius:50%;"></div>
<div class="r" style="left:1457.175px;top:240px;width:2px;height:2px;background:#1f3f7f;border-radius:50%;"></div>
<div class="t" style="left:1466.4px;top:233.00px;font-size:16px;transform:scaleX(1.0652);"><span style="color:#a52a6b;">&lt;/head&gt;</span></div>
<svg class="r" style="left:1375px;top:259.7px;overflow:visible" width="6.5" height="5" viewBox="0 0 6.5 5"><path d="M0 0 H6.5 V5 Z" fill="#3c3c3c"/></svg>
<div class="t" style="left:1383.6px;top:254.00px;font-size:16px;transform:scaleX(1.0507);"><span style="color:#a52a6b;">&lt;body</span><span style="color:#b0561f;"> class</span><span style="color:#a52a6b;">=&quot;</span><span style="color:#1f52ac;">neterror</span><span style="color:#a52a6b;">&quot;</span><span style="color:#b0561f;"> style</span><span style="color:#a52a6b;">=&quot;</span><span style="color:#1f52ac;">font-family: &#x27;Segoe UI&#x27;, Tahoma, sans-s</span></div>
<div class="t" style="left:1383.6px;top:275.00px;font-size:16px;transform:scaleX(1.0159);"><span style="color:#1f52ac;">erif; font-size: 75%</span><span style="color:#a52a6b;">&quot;&gt;</span></div>
<svg class="r" style="left:1390px;top:301.5px;overflow:visible" width="10" height="6" viewBox="0 0 10 6"><path d="M0 0 L10 0 L5 5.5 Z" fill="#3c3c3c"/></svg>
<div class="t" style="left:1402.8px;top:297.00px;font-size:16px;transform:scaleX(1.0354);"><span style="color:#a52a6b;">&lt;div</span><span style="color:#b0561f;"> id</span><span style="color:#a52a6b;">=&quot;</span><span style="color:#1f52ac;">content</span><span style="color:#a52a6b;">&quot;&gt;</span></div>
<div class="t" style="left:1414px;top:317.00px;font-size:16px;transform:scaleX(0.9673);"><span style="color:#2a7d3d;">&lt;!----&gt;</span></div>
<div class="r" style="left:1352px;top:338.1px;width:1549px;height:20.7px;background:#eceef3;"></div>
<div class="r" style="left:1355.5px;top:346px;width:3px;height:3px;background:#3c3c3c;border-radius:50%;"></div>
<div class="r" style="left:1360.0px;top:346px;width:3px;height:3px;background:#3c3c3c;border-radius:50%;"></div>
<div class="r" style="left:1364.5px;top:346px;width:3px;height:3px;background:#3c3c3c;border-radius:50%;"></div>
<svg class="r" style="left:1405px;top:344px;overflow:visible" width="10" height="6" viewBox="0 0 10 6"><path d="M0 0 L10 0 L5 5.5 Z" fill="#3c3c3c"/></svg>
<div class="t" style="left:1417.5px;top:340.00px;font-size:16px;transform:scaleX(1.0747);"><span style="color:#a52a6b;">&lt;div</span><span style="color:#b0561f;"> id</span><span style="color:#a52a6b;">=&quot;</span><span style="color:#1f52ac;">main-frame-error</span><span style="color:#a52a6b;">&quot;</span><span style="color:#b0561f;"> class</span><span style="color:#a52a6b;">=&quot;</span><span style="color:#1f52ac;">interstitial-wrapper </span><span style="color:#a52a6b;">&quot;&gt;</span></div>
<div class="t" style="left:1846.6px;top:340.00px;font-size:16px;transform:scaleX(0.9132);"><span style="color:#7a7a7a;font-style:italic;">== $0</span></div>
<div class="r" style="left:1405px;top:359px;width:1.3px;height:129px;background:#d3e3fd;"></div>
<svg class="r" style="left:1422px;top:365.5px;overflow:visible" width="6" height="10" viewBox="0 0 6 10"><path d="M0 0 L5.5 5 L0 10 Z" fill="#3c3c3c"/></svg>
<div class="t" style="left:1432.5px;top:362.00px;font-size:16px;transform:scaleX(1.0569);"><span style="color:#a52a6b;">&lt;div</span><span style="color:#b0561f;"> id</span><span style="color:#a52a6b;">=&quot;</span><span style="color:#1f52ac;">main-content</span><span style="color:#a52a6b;">&quot;&gt;</span></div>
<div class="r" style="left:1615.4px;top:364.5px;width:16.59999999999991px;height:11px;box-sizing:border-box;border:1px solid #a8c7fa;border-radius:6px;background:#fff;"></div>
<div class="r" style="left:1619.4px;top:369px;width:2px;height:2px;background:#1f3f7f;border-radius:50%;"></div>
<div class="r" style="left:1622.7px;top:369px;width:2px;height:2px;background:#1f3f7f;border-radius:50%;"></div>
<div class="r" style="left:1626.0px;top:369px;width:2px;height:2px;background:#1f3f7f;border-radius:50%;"></div>
<div class="t" style="left:1635px;top:362.00px;font-size:16px;transform:scaleX(1.0548);"><span style="color:#a52a6b;">&lt;/div&gt;</span></div>
<svg class="r" style="left:1422px;top:386.5px;overflow:visible" width="6" height="10" viewBox="0 0 6 10"><path d="M0 0 L5.5 5 L0 10 Z" fill="#3c3c3c"/></svg>
<div class="t" style="left:1432.5px;top:383.00px;font-size:16px;transform:scaleX(1.0626);"><span style="color:#a52a6b;">&lt;div</span><span style="color:#b0561f;"> id</span><span style="color:#a52a6b;">=&quot;</span><span style="color:#1f52ac;">buttons</span><span style="color:#a52a6b;">&quot;</span><span style="color:#b0561f;"> class</span><span style="color:#a52a6b;">=&quot;</span><span style="color:#1f52ac;">nav-wrapper suggested-left</span><span style="color:#a52a6b;">&quot;&gt;</span></div>
<div class="r" style="left:1845px;top:385.5px;width:16.59999999999991px;height:11px;box-sizing:border-box;border:1px solid #a8c7fa;border-radius:6px;background:#fff;"></div>
<div class="r" style="left:1849.0px;top:390px;width:2px;height:2px;background:#1f3f7f;border-radius:50%;"></div>
<div class="r" style="left:1852.3px;top:390px;width:2px;height:2px;background:#1f3f7f;border-radius:50%;"></div>
<div class="r" style="left:1855.6px;top:390px;width:2px;height:2px;background:#1f3f7f;border-radius:50%;"></div>
<div class="t" style="left:1432.5px;top:403.00px;font-size:16px;transform:scaleX(1.0502);"><span style="color:#a52a6b;">&lt;/div&gt;</span></div>
<div class="t" style="left:1428.9px;top:424.00px;font-size:16px;transform:scaleX(0.9779);"><span style="color:#2a7d3d;">&lt;!--?lit$067153474$--&gt;</span></div>
<svg class="r" style="left:1422px;top:449.5px;overflow:visible" width="6" height="10" viewBox="0 0 6 10"><path d="M0 0 L5.5 5 L0 10 Z" fill="#3c3c3c"/></svg>
<div class="t" style="left:1432.5px;top:447.00px;font-size:16px;transform:scaleX(1.0277);"><span style="color:#a52a6b;">&lt;div</span><span style="color:#b0561f;"> id</span><span style="color:#a52a6b;">=&quot;</span><span style="color:#1f52ac;">details</span><span style="color:#a52a6b;">&quot;&gt;</span></div>
<div class="r" style="left:1562px;top:449.5px;width:17px;height:11px;box-sizing:border-box;border:1px solid #a8c7fa;border-radius:6px;background:#fff;"></div>
<div class="r" style="left:1566.2px;top:454px;width:2px;height:2px;background:#1f3f7f;border-radius:50%;"></div>
<div class="r" style="left:1569.5px;top:454px;width:2px;height:2px;background:#1f3f7f;border-radius:50%;"></div>
<div class="r" style="left:1572.8px;top:454px;width:2px;height:2px;background:#1f3f7f;border-radius:50%;"></div>
<div class="t" style="left:1583px;top:447.00px;font-size:16px;transform:scaleX(1.0319);"><span style="color:#a52a6b;">&lt;/div&gt;</span></div>
<div class="t" style="left:1413.9px;top:469.00px;font-size:16px;transform:scaleX(1.0434);"><span style="color:#a52a6b;">&lt;/div&gt;</span></div>
<div class="t" style="left:1413.3px;top:489.00px;font-size:16px;transform:scaleX(0.9815);"><span style="color:#2a7d3d;">&lt;!--?lit$067153474$--&gt;</span></div>
<div class="r" style="left:1351px;top:505px;width:552px;height:18px;overflow:hidden;">
<svg class="r" style="left:55.40000000000009px;top:9.5px;overflow:visible" width="6" height="10" viewBox="0 0 6 10"><path d="M0 0 L5.5 5 L0 10 Z" fill="#3c3c3c"/></svg>
<div class="t" style="left:66.5px;top:6.00px;font-size:16px;transform:scaleX(1.0613);"><span style="color:#a52a6b;">&lt;div</span><span style="color:#b0561f;"> id</span><span style="color:#a52a6b;">=&quot;</span><span style="color:#1f52ac;">sub-frame-error</span><span style="color:#a52a6b;">&quot;&gt;</span></div>
<div class="r" style="left:269.5px;top:9.5px;width:16.5px;height:11px;box-sizing:border-box;border:1px solid #a8c7fa;border-radius:6px;background:#fff;"></div>
<div class="r" style="left:273.45px;top:14px;width:2px;height:2px;background:#1f3f7f;border-radius:50%;"></div>
<div class="r" style="left:276.75px;top:14px;width:2px;height:2px;background:#1f3f7f;border-radius:50%;"></div>
<div class="r" style="left:280.05px;top:14px;width:2px;height:2px;background:#1f3f7f;border-radius:50%;"></div>
<div class="t" style="left:289px;top:6.00px;font-size:16px;transform:scaleX(1.0640);"><span style="color:#a52a6b;">&lt;/div&gt;</span></div>
</div>
<div class="r" style="left:1863.5px;top:206px;width:32px;height:32px;border-radius:50%;background:#fff;box-shadow:0 1px 3px rgba(0,0,0,0.35);"></div>
<svg class="r" style="left:1871px;top:213px;overflow:visible" width="17" height="18" viewBox="0 0 17 18"><circle cx="8.5" cy="2.2" r="2" fill="#1f1f1f"/><path d="M1 5.5 H16 M8.5 5.5 V11 M5.8 17 L7 9.5 H10 L11.2 17" fill="none" stroke="#1f1f1f" stroke-width="2.2"/></svg>
<svg class="r" style="left:1905px;top:192px;overflow:visible" width="11" height="7" viewBox="0 0 11 7"><path d="M0.5 7 L5.5 0.5 L10.5 7 Z" fill="#5f5f5f"/></svg>
<div class="r" style="left:1905.5px;top:208px;width:10px;height:216.5px;background:#8b8b8b;border-radius:5px;"></div>
<svg class="r" style="left:1905px;top:510px;overflow:visible" width="11" height="7" viewBox="0 0 11 7"><path d="M0.5 0 L5.5 6.5 L10.5 0 Z" fill="#5f5f5f"/></svg>
<div class="r" style="left:1351px;top:523px;width:569px;height:1px;background:#d3e3fd;"></div>
<div class="r" style="left:1604px;top:524px;width:293px;height:29px;background:#d3e3fd;"></div>
<div class="t" style="left:1360px;top:530.00px;font-size:15px;transform:scaleX(1.0337);"><span style="color:#a52a6b;">html</span></div>
<div class="t" style="left:1407.9px;top:530.00px;font-size:15px;transform:scaleX(1.0062);"><span style="color:#a52a6b;">body</span><span style="color:#b0561f;">.neterror</span></div>
<div class="t" style="left:1515.7px;top:530.00px;font-size:15px;transform:scaleX(1.0230);"><span style="color:#a52a6b;">div</span><span style="color:#b0561f;">#content</span></div>
<div class="t" style="left:1612.4px;top:530.00px;font-size:15px;transform:scaleX(1.0222);"><span style="color:#a52a6b;">div</span><span style="color:#1f1f1f;">#main-frame-error.interstitial-wrapper.</span></div>
<div class="r" style="left:1351px;top:553px;width:569px;height:1px;background:#d3e3fd;"></div>
<div class="r" style="left:1351px;top:554px;width:569px;height:33px;background:#edf2fa;"></div>
<div class="r" style="left:1351px;top:587px;width:569px;height:1px;background:#d3e3fd;"></div>
<div class="t" style="left:1364px;top:564.00px;font-size:15px;color:#3f4247;font-weight:400;font-style:normal;transform:scaleX(0.9129);">Kiểu</div>
<div class="t" style="left:1417px;top:564.00px;font-size:15px;color:#3f4247;font-weight:400;font-style:normal;transform:scaleX(0.9982);">Đã tính toán</div>
<div class="t" style="left:1525px;top:564.00px;font-size:15px;color:#1f5c94;font-weight:400;font-style:normal;transform:scaleX(0.9376);">Bố cục</div>
<div class="r" style="left:1512px;top:584px;width:70px;height:3px;background:#1f5c94;border-radius:3px 3px 0 0;"></div>
<div class="t" style="left:1594.7px;top:564.00px;font-size:15px;color:#3f4247;font-weight:400;font-style:normal;transform:scaleX(0.9432);">Trình xử lý sự kiện</div>
<div class="t" style="left:1738.8px;top:564.00px;font-size:15px;color:#3f4247;font-weight:400;font-style:normal;transform:scaleX(1.0024);">Điểm ngắt DOM</div>
<svg class="r" style="left:1865px;top:566px;overflow:visible" width="15" height="11" viewBox="0 0 15 11"><path d="M1 1 L5.5 5.5 L1 10 M8 1 L12.5 5.5 L8 10" fill="none" stroke="#3c4043" stroke-width="1.7"/></svg>
<div class="r" style="left:1351px;top:588px;width:552px;height:24px;background:#f1f5fb;"></div>
<div class="r" style="left:1351px;top:612px;width:552px;height:1px;background:#d3e3fd;"></div>
<svg class="r" style="left:1357px;top:597px;overflow:visible" width="11" height="9" viewBox="0 0 11 9"><path d="M0 0 H11 L5.5 8.5 Z" fill="#1f1f1f"/></svg>
<div class="t" style="left:1371px;top:593.00px;font-size:15px;color:#1f1f1f;font-weight:400;font-style:normal;transform:scaleX(0.9633);">Kiểu lưới/Kiểu xây gạch</div>
<div class="t" style="left:1371px;top:633.00px;font-size:15px;color:#1f1f1f;font-weight:400;font-style:normal;transform:scaleX(0.9989);">Cài đặt hiển thị lớp phủ</div>
<div class="r" style="left:1371px;top:669px;width:153px;height:12px;border:1px solid #c4c7c5;border-bottom:none;border-radius:6px 6px 0 0;"></div>
<svg class="r" style="left:1905px;top:595.5px;overflow:visible" width="11" height="7.5" viewBox="0 0 11 7.5"><path d="M0.5 7.5 L5.5 0.5 L10.5 7.5 Z" fill="#6a6a6a"/></svg>
<div class="r" style="left:1905.5px;top:610.6px;width:10px;height:21.2px;background:#8b8b8b;border-radius:5px;"></div>
<svg class="r" style="left:1905px;top:663px;overflow:visible" width="11" height="8" viewBox="0 0 11 8"><path d="M0.5 0 L5.5 7.5 L10.5 0 Z" fill="#6a6a6a"/></svg>
<div class="r" style="left:1351px;top:676px;width:569px;height:1px;background:#d3e3fd;"></div>
<div class="r" style="left:1351px;top:677px;width:569px;height:33.5px;background:#edf2fa;"></div>
<div class="r" style="left:1351px;top:710.5px;width:569px;height:1px;background:#d3e3fd;"></div>
<div class="r" style="left:1369.8px;top:685.9px;width:3.2px;height:3.2px;background:#3c4043;border-radius:50%;"></div>
<div class="r" style="left:1369.8px;top:692.4px;width:3.2px;height:3.2px;background:#3c4043;border-radius:50%;"></div>
<div class="r" style="left:1369.8px;top:698.9px;width:3.2px;height:3.2px;background:#3c4043;border-radius:50%;"></div>
<div class="t" style="left:1399px;top:687.00px;font-size:15px;color:#3f4247;font-weight:400;font-style:normal;transform:scaleX(0.9815);">Bảng điều khiển</div>
<div class="t" style="left:1531px;top:687.00px;font-size:15px;color:#3f4247;font-weight:400;font-style:normal;transform:scaleX(0.9771);">Trợ giúp AI</div>
<div class="t" style="left:1641.2px;top:687.00px;font-size:15px;color:#3f4247;font-weight:400;font-style:normal;transform:scaleX(0.9774);">Tính năng mới</div>
<div class="t" style="left:1774.4px;top:687.00px;font-size:15px;color:#1f5c94;font-weight:400;font-style:normal;transform:scaleX(0.9801);">Vấn đề</div>
<svg class="r" style="left:1826.4px;top:690.7px;overflow:visible" width="10" height="10" viewBox="0 0 10 10"><path d="M0.7 0.7 L9.3 9.3 M9.3 0.7 L0.7 9.3" stroke="#1f1f1f" stroke-width="1.6"/></svg>
<div class="r" style="left:1762px;top:707.5px;width:84px;height:3px;background:#1f5c94;border-radius:3px 3px 0 0;"></div>
<svg class="r" style="left:1851px;top:690px;overflow:visible" width="15" height="11" viewBox="0 0 15 11"><path d="M1 1 L5.5 5.5 L1 10 M8 1 L12.5 5.5 L8 10" fill="none" stroke="#3c4043" stroke-width="1.7"/></svg>
<svg class="r" style="left:1894.4px;top:687.7px;overflow:visible" width="13" height="13" viewBox="0 0 13 13"><path d="M0.8 0.8 L12.2 12.2 M12.2 0.8 L0.8 12.2" stroke="#1f1f1f" stroke-width="1.8"/></svg>
<div class="r" style="left:1366.3px;top:721px;width:14.5px;height:13.5px;box-sizing:border-box;border:1.5px solid #6f6f6f;border-radius:2.5px;"></div>
<div class="t" style="left:1389px;top:720.00px;font-size:15px;color:#3f4247;font-weight:400;font-style:normal;transform:scaleX(1.0178);">Nhóm theo loại</div>
<div class="r" style="left:1506.2px;top:721px;width:14.5px;height:14px;background:#2b6cc4;border-radius:2.5px;"></div>
<svg class="r" style="left:1506.2px;top:721px;overflow:visible" width="14.5" height="14" viewBox="0 0 14.5 14"><path d="M3 7.2 L6 10.2 L11.8 3.8" fill="none" stroke="#fff" stroke-width="1.8"/></svg>
<div class="t" style="left:1528.8px;top:720.00px;font-size:15px;color:#3f4247;font-weight:400;font-style:normal;transform:scaleX(0.9806);">Bao gồm cả vấn đề của cookie bên thứ ba</div>
<div class="r" style="left:1817px;top:720px;width:1px;height:16px;background:#d3e3fd;"></div>
<svg class="r" style="left:1828px;top:720px;overflow:visible" width="12" height="11" viewBox="0 0 12 11"><path d="M0 0 H12 V11 L9 8.5 H0 Z" fill="#dc362e"/><path d="M3.5 1.8 L8.5 6.8 M8.5 1.8 L3.5 6.8" stroke="#fff" stroke-width="1.3"/></svg>
<div class="t" style="left:1843px;top:720.00px;font-size:14px;color:#3f4247;font-weight:400;font-style:normal;transform:scaleX(0.9767);">0</div>
<svg class="r" style="left:1859.6px;top:720px;overflow:visible" width="12.4" height="11" viewBox="0 0 12.4 11"><path d="M0 0 H12.4 V11 L9.4 8.5 H0 Z" fill="#e8710a"/><rect x="5.5" y="1.5" width="1.6" height="4" fill="#fff"/><rect x="5.5" y="6.3" width="1.6" height="1.6" fill="#fff"/></svg>
<div class="t" style="left:1874.7px;top:720.00px;font-size:14px;color:#3f4247;font-weight:400;font-style:normal;transform:scaleX(0.9767);">0</div>
<svg class="r" style="left:1892px;top:720px;overflow:visible" width="13" height="11" viewBox="0 0 13 11"><path d="M0 0 H13 V11 L10 8.5 H0 Z" fill="#1a66d6"/><path d="M2.5 2.5 H10.5 M2.5 4.5 H10.5 M2.5 6.5 H8" stroke="#fff" stroke-width="1"/></svg>
<div class="t" style="left:1907.4px;top:720.00px;font-size:14px;color:#3f4247;font-weight:400;font-style:normal;transform:scaleX(0.9767);">0</div>
<div class="r" style="left:1351px;top:743px;width:569px;height:1px;background:#d3e3fd;"></div>
<div class="t" style="left:1507.7px;top:851.00px;font-size:18px;color:#1f1f1f;font-weight:400;font-style:normal;transform:scaleX(0.9682);">Không phát hiện thấy vấn đề nào</div>
<div class="t" style="left:1488px;top:880.00px;font-size:15px;color:#474747;font-weight:400;font-style:normal;transform:scaleX(0.9913);">Trên trang này, bạn có thể tìm thấy cảnh báo</div>
<div class="t" style="left:1534px;top:900.00px;font-size:15px;color:#474747;font-weight:400;font-style:normal;transform:scaleX(0.9929);">của trình duyệt.</div>
<div class="t" style="left:1642px;top:900.00px;font-size:15px;color:#1f5a96;font-weight:400;font-style:normal;transform:scaleX(0.9876);text-decoration:underline;">Tìm hiểu thêm</div>
<div class="r" style="left:0px;top:1020px;width:1920px;height:60px;background:linear-gradient(90deg,#d5ebbd 0px,#dde9bb 90px,#e3e7b9 170px,#e6e0c4 240px,#dedad0 300px,#d9d9d6 380px,#d8d9d6 440px,#d0dcc9 490px,#c9dfc0 540px,#cde6c2 660px,#c9e3c0 820px,#c8e2bf 1000px,#cae6c2 1250px,#cdebc5 1500px,#d1f0c9 1700px,#d3f2ca 1920px);"></div>
<div class="r" style="left:0px;top:1020px;width:1920px;height:60px;background:linear-gradient(180deg,rgba(110,120,100,0.10) 0px,rgba(255,250,235,0.10) 60px);"></div>
<div class="r" style="left:180px;top:1050px;width:160px;height:30px;background:radial-gradient(ellipse at 50% 100%,rgba(240,220,200,0.5),rgba(240,220,200,0) 70%);"></div>
<div class="r" style="left:0px;top:1019.5px;width:1920px;height:1.2px;background:#a3a79d;"></div>
<svg class="r" style="left:26px;top:1036px;overflow:visible" width="29.3" height="29.3" viewBox="0 0 29.3 29.3"><defs><linearGradient id="st" gradientUnits="userSpaceOnUse" x1="0" y1="0" x2="29.3" y2="29.3"><stop offset="0" stop-color="#48c0f2"/><stop offset="1" stop-color="#0a68d2"/></linearGradient></defs><rect x="0" y="0" width="14" height="14" rx="1.5" fill="url(#st)"/><rect x="15.3" y="0" width="14" height="14" rx="1.5" fill="url(#st)"/><rect x="0" y="15.3" width="14" height="14" rx="1.5" fill="url(#st)"/><rect x="15.3" y="15.3" width="14" height="14" rx="1.5" fill="url(#st)"/></svg>
<svg class="r" style="left:84px;top:1036.3px;overflow:visible" width="26" height="28" viewBox="0 0 26 28"><circle cx="10.8" cy="11" r="9.3" fill="none" stroke="#1c1c1c" stroke-width="2.8"/><path d="M17.5 18 L24.5 25.5" stroke="#1c1c1c" stroke-width="3" stroke-linecap="round"/></svg>
<svg class="r" style="left:137px;top:1036.3px;overflow:visible" width="30" height="28" viewBox="0 0 30 28"><rect x="0" y="7.4" width="22.5" height="20" rx="2" fill="#1e1e1e"/><rect x="7.4" y="0" width="22.3" height="19.7" rx="1.5" fill="#dcdcdc" opacity="0.85"/></svg>
<svg class="r" style="left:193px;top:1038.6px;overflow:visible" width="27.3" height="21.5" viewBox="0 0 27.3 21.5"><path d="M0 2 Q0 0 2 0 H9 L11.5 2.5 H25.3 Q27.3 2.5 27.3 4.5 V19.5 Q27.3 21.5 25.3 21.5 H2 Q0 21.5 0 19.5 Z" fill="#e9ad25"/><path d="M0 5 H27.3 V19.5 Q27.3 21.5 25.3 21.5 H2 Q0 21.5 0 19.5 Z" fill="#f7d070"/></svg>
<div class="r" style="left:232px;top:1040px;width:83px;height:22px;overflow:hidden;">
<div class="t" style="left:0.4px;top:3.00px;font-size:15px;color:#1a1a1a;font-weight:400;font-style:normal;">survival - File Explorer</div>
</div>
<div class="r" style="left:202.8px;top:1070.5px;width:8.199999999999989px;height:3.5px;background:#6b7868;border-radius:2px;"></div>
<svg class="r" style="left:340px;top:1035px;overflow:visible" width="30.5" height="30" viewBox="0 0 30.5 30"><defs><linearGradient id="eg1" x1="0" y1="0" x2="0.3" y2="1"><stop offset="0" stop-color="#33b6ec"/><stop offset="0.55" stop-color="#1a7fd4"/><stop offset="1" stop-color="#0c4f9e"/></linearGradient><linearGradient id="eg2" x1="0" y1="0" x2="1" y2="0.6"><stop offset="0" stop-color="#2aa6e0"/><stop offset="1" stop-color="#72d65a"/></linearGradient></defs><circle cx="15" cy="15" r="15" fill="url(#eg1)"/><path d="M2.5 9 Q6 0.5 15.5 0.5 Q25 0.8 29 9 Q30.5 13 30 16.5 Q29 21 24.5 21 Q19.5 21 18 18.5 Q21.5 16 20 12.5 Q17.5 8 11.5 8.5 Q6 9.5 2.5 9Z" fill="url(#eg2)"/><path d="M30 16.5 Q29.5 21 25 21.5 Q20 22 17 19 Q14 16 14.5 13.5 Q13 19 17 23 Q21 26.5 26.5 24.5 Q29.3 21.5 30 16.5Z" fill="#dadad6"/><path d="M9.5 14 Q9 21 15 24.5 Q20.5 27.5 26.5 24.5 Q22 30 15 30 Q8 29.5 4.5 24 Q7 25 9.5 14Z" fill="#0b4a96" opacity="0.85"/></svg>
<svg class="r" style="left:394.7px;top:1035.5px;overflow:visible" width="29.3" height="29.5" viewBox="0 0 29.3 29.5"><path d="M8 6 V2 Q8 0.8 9.2 0.8 H20 Q21.2 0.8 21.2 2 V6" fill="none" stroke="#2aa0e0" stroke-width="1.8"/><rect x="0" y="4.5" width="29.3" height="25" rx="3" fill="#1c4a8a"/><rect x="9.5" y="11" width="4.5" height="4.5" fill="#f25022"/><rect x="15" y="11" width="4.5" height="4.5" fill="#7fba00"/><rect x="9.5" y="16.5" width="4.5" height="4.5" fill="#00a4ef"/><rect x="15" y="16.5" width="4.5" height="4.5" fill="#ffb900"/></svg>
<svg class="r" style="left:451px;top:1036px;overflow:visible" width="28" height="28" viewBox="0 0 28 28"><circle cx="14" cy="14" r="13.8" fill="#1b95cc" stroke="#e0f0f8" stroke-width="0.6"/><text x="14" y="22" font-family="Liberation Sans" font-weight="700" font-size="21" fill="#fff" text-anchor="middle">?</text></svg>
<svg class="r" style="left:506px;top:1035.5px;overflow:visible" width="28.5" height="29" viewBox="0 0 28.5 29"><circle cx="14.25" cy="14.5" r="14.2" fill="#0b3fc2" stroke="#e8eef8" stroke-width="0.5"/><g fill="none" stroke="#f0f0f0" stroke-width="2.4"><path d="M11.8 2 L5.6 21.5"/><path d="M8.6 10.2 H13.6 L10.4 21.5"/><path d="M15.4 10.2 H20.6 L17.3 20.8 H12.2"/><path d="M15.4 10.2 L9.6 28.2"/></g></svg>
<svg class="r" style="left:560px;top:1035px;overflow:visible" width="30" height="30" viewBox="0 0 30 30"><circle cx="15" cy="15" r="15" fill="#1877f2"/><path d="M16.8 30 V19.2 H20.5 L21 15 H16.8 V12.5 Q16.8 10.8 18.6 10.8 H21.1 V7.1 Q19.6 6.9 18 6.9 Q12.6 6.9 12.6 12.2 V15 H9 V19.2 H12.6 V30 Z" fill="#fff"/></svg>
<svg class="r" style="left:614.8px;top:1035px;overflow:visible" width="30.2" height="30" viewBox="0 0 30.2 30"><rect x="0" y="0" width="30.2" height="30" rx="4.5" fill="#d40a0a"/><path d="M3 7 L8.2 20 L13 8 H10.6 L8.2 14.5 L5.6 7 Z" fill="none" stroke="#f4dcdc" stroke-width="0.8"/><path d="M13 8 H16.5 V18 H14 Z" fill="#1a9a3a"/><path d="M16.5 8 H18.5 L21 15 L26 7 H28 L21.5 19 L17 19 Z" fill="#1428a0"/><text x="15" y="25.5" font-family="Liberation Sans" font-size="6.5" fill="#f4e0e0" text-anchor="middle">go</text></svg>
<div class="r" style="left:661px;top:1026.2px;width:145.7px;height:47.8px;background:rgba(255,255,255,0.42);border-radius:5px;box-shadow:inset 0 0 0 1px rgba(255,255,255,0.35);"></div>
<svg class="r" style="left:669.8px;top:1035px;overflow:visible" width="30" height="30" viewBox="0 0 30 30"><circle cx="15" cy="15" r="15" fill="#fff"/><path d="M15 8.2 L28.37 8.2 A15 15 0 0 0 2.42 6.82 L9.11 18.4 A6.8 6.8 0 0 1 15 8.2Z" fill="#db3a2e"/><path d="M15 8.2 L28.37 8.2 A15 15 0 0 0 2.42 6.82 L9.11 18.4 A6.8 6.8 0 0 1 15 8.2Z" fill="#1f9b48" transform="rotate(-120 15 15)"/><path d="M15 8.2 L28.37 8.2 A15 15 0 0 0 2.42 6.82 L9.11 18.4 A6.8 6.8 0 0 1 15 8.2Z" fill="#fcc11a" transform="rotate(120 15 15)"/><circle cx="15" cy="15" r="6.9" fill="#ffffff"/><circle cx="15" cy="15" r="5.4" fill="#2a7de1"/><circle cx="22.5" cy="7.7" r="7.3" fill="#9b3fc0"/><text x="22.5" y="10.8" font-family="Liberation Sans" font-size="8.5" fill="#fff" text-anchor="middle">G</text></svg>
<div class="r" style="left:710px;top:1040px;width:88px;height:22px;overflow:hidden;">
<div class="t" style="left:0.2px;top:3.00px;font-size:15px;color:#1a1a1a;font-weight:400;font-style:normal;">abcsnoobmcname.42web.io</div>
</div>
<div class="r" style="left:675px;top:1070.5px;width:19.600000000000023px;height:3.5px;background:#5c80b2;border-radius:2px;"></div>
<svg class="r" style="left:821.8px;top:1035px;overflow:visible" width="30" height="30" viewBox="0 0 30 30"><circle cx="15" cy="15" r="15" fill="#fff"/><path d="M15 8.2 L28.37 8.2 A15 15 0 0 0 2.42 6.82 L9.11 18.4 A6.8 6.8 0 0 1 15 8.2Z" fill="#db3a2e"/><path d="M15 8.2 L28.37 8.2 A15 15 0 0 0 2.42 6.82 L9.11 18.4 A6.8 6.8 0 0 1 15 8.2Z" fill="#1f9b48" transform="rotate(-120 15 15)"/><path d="M15 8.2 L28.37 8.2 A15 15 0 0 0 2.42 6.82 L9.11 18.4 A6.8 6.8 0 0 1 15 8.2Z" fill="#fcc11a" transform="rotate(120 15 15)"/><circle cx="15" cy="15" r="6.9" fill="#ffffff"/><circle cx="15" cy="15" r="5.4" fill="#2a7de1"/><circle cx="22.5" cy="7.7" r="7.3" fill="#9b3fc0"/><text x="22.5" y="10.8" font-family="Liberation Sans" font-size="8.5" fill="#fff" text-anchor="middle">G</text></svg>
<div class="r" style="left:862px;top:1040px;width:88px;height:22px;overflow:hidden;">
<div class="t" style="left:0.5px;top:3.00px;font-size:15px;color:#1a1a1a;font-weight:400;font-style:normal;">Danh sách game</div>
</div>
<div class="r" style="left:833.3px;top:1070.5px;width:7.900000000000091px;height:3.5px;background:#6b7868;border-radius:2px;"></div>
<svg class="r" style="left:975px;top:1035px;overflow:visible" width="30.2" height="30" viewBox="0 0 20 20"><rect x="0" y="0" width="20" height="20" fill="#00ff00"/><rect x="5" y="1.7" width="10" height="10" fill="#0a0618"/><rect x="6" y="2.4" width="8.6" height="1.8" fill="#f2dcc4"/><rect x="6" y="4.2" width="4.3" height="6.5" fill="#6d1fd8"/><rect x="10.3" y="4.2" width="4.3" height="6.5" fill="#1f3fb0"/><path d="M6.8 4.6 V6.4 H8.6 M11.6 6.4 H13.4 V4.6" fill="none" stroke="#e8e4d8" stroke-width="1"/><rect x="8.8" y="7.4" width="1.6" height="0.8" fill="#0a0618"/><rect x="6" y="10.7" width="8" height="4.2" fill="#0a0618"/><rect x="6.5" y="11.2" width="1.8" height="3" fill="#7020d0"/><rect x="8.6" y="11.2" width="3" height="3.5" fill="#a04a86"/><rect x="11.8" y="11.2" width="1.8" height="3" fill="#2040b8"/><rect x="8" y="14.6" width="4" height="4" fill="#0a0618"/><rect x="8.6" y="15.2" width="2.8" height="2.6" fill="#1f2f9a"/></svg>
<div class="t" style="left:1015.2px;top:1043.00px;font-size:15px;color:#1a1a1a;font-weight:400;font-style:normal;transform:scaleX(1.0368);">Thông tin tài</div>
<div class="r" style="left:986.2px;top:1070.5px;width:7.7999999999999545px;height:3.5px;background:#6b7868;border-radius:2px;"></div>
<svg class="r" style="left:1126.8px;top:1035px;overflow:visible" width="30" height="30" viewBox="0 0 30 30"><circle cx="15" cy="15" r="15" fill="#fff"/><path d="M15 8.2 L28.37 8.2 A15 15 0 0 0 2.42 6.82 L9.11 18.4 A6.8 6.8 0 0 1 15 8.2Z" fill="#db3a2e"/><path d="M15 8.2 L28.37 8.2 A15 15 0 0 0 2.42 6.82 L9.11 18.4 A6.8 6.8 0 0 1 15 8.2Z" fill="#1f9b48" transform="rotate(-120 15 15)"/><path d="M15 8.2 L28.37 8.2 A15 15 0 0 0 2.42 6.82 L9.11 18.4 A6.8 6.8 0 0 1 15 8.2Z" fill="#fcc11a" transform="rotate(120 15 15)"/><circle cx="15" cy="15" r="6.9" fill="#ffffff"/><circle cx="15" cy="15" r="5.4" fill="#2a7de1"/><circle cx="22.3" cy="7.1" r="7.6" fill="#00e000"/><svg x="15.8" y="0.6" width="13" height="13" viewBox="0 0 20 20"><rect x="5" y="1.7" width="10" height="10" fill="#0a0618"/><rect x="6" y="2.4" width="8.6" height="1.8" fill="#f2dcc4"/><rect x="6" y="4.2" width="4.3" height="6.5" fill="#6d1fd8"/><rect x="10.3" y="4.2" width="4.3" height="6.5" fill="#1f3fb0"/><path d="M6.8 4.6 V6.4 H8.6 M11.6 6.4 H13.4 V4.6" fill="none" stroke="#e8e4d8" stroke-width="1"/><rect x="8.8" y="7.4" width="1.6" height="0.8" fill="#0a0618"/><rect x="6" y="10.7" width="8" height="4.2" fill="#0a0618"/><rect x="6.5" y="11.2" width="1.8" height="3" fill="#7020d0"/><rect x="8.6" y="11.2" width="3" height="3.5" fill="#a04a86"/><rect x="11.8" y="11.2" width="1.8" height="3" fill="#2040b8"/><rect x="8" y="14.6" width="4" height="4" fill="#0a0618"/><rect x="8.6" y="15.2" width="2.8" height="2.6" fill="#1f2f9a"/></svg></svg>
<div class="t" style="left:1167.5px;top:1043.00px;font-size:15px;color:#1a1a1a;font-weight:400;font-style:normal;transform:scaleX(0.9676);">Trang chủ - R</div>
<div class="r" style="left:1138px;top:1070.5px;width:8px;height:3.5px;background:#6b7868;border-radius:2px;"></div>
<svg class="r" style="left:1281.5px;top:1036px;overflow:visible" width="26.5" height="26.5" viewBox="0 0 26.5 26.5"><defs><linearGradient id="rd" x1="0" y1="0" x2="0" y2="1"><stop offset="0" stop-color="#36b0e8"/><stop offset="1" stop-color="#0e86c8"/></linearGradient></defs><path d="M0 3 Q13 -2 26.5 3 Q27 17 13.25 26.5 Q-0.5 17 0 3Z" fill="url(#rd)"/><path d="M7 10 L12 18 L19 8" fill="none" stroke="#cdeefc" stroke-width="1.5"/><circle cx="7" cy="10" r="1.6" fill="#fff"/><circle cx="12" cy="18" r="1.6" fill="#fff"/><circle cx="19" cy="8" r="2.2" fill="none" stroke="#fff" stroke-width="1"/></svg>
<div class="r" style="left:1320px;top:1040px;width:59px;height:22px;overflow:hidden;">
<div class="t" style="left:0.5px;top:3.00px;font-size:15px;color:#1a1a1a;font-weight:400;font-style:normal;">Radmin VPN</div>
</div>
<div class="r" style="left:1291.2px;top:1070.5px;width:8.0px;height:3.5px;background:#6b7868;border-radius:2px;"></div>
<svg class="r" style="left:1404.6px;top:1042px;overflow:visible" width="26.2" height="16.6" viewBox="0 0 26.2 16.6"><path d="M4 0.5 H26 L23 16 H1 Z" fill="#5ab4f0"/><path d="M7 4.5 H22 L21 11.5 H6 Z" fill="#e8f6ff"/><path d="M8.5 6.5 H20 L19.5 9.5 H8 Z" fill="#3a9ae0"/><path d="M0 3 H4 M0 6 H3" stroke="#a0d4f8" stroke-width="1"/></svg>
<div class="t" style="left:1443.2px;top:1043.00px;font-size:15px;color:#1a1a1a;font-weight:400;font-style:normal;transform:scaleX(0.9453);">Chạy</div>
<div class="r" style="left:1414.3px;top:1070.5px;width:7.7000000000000455px;height:3.5px;background:#6b7868;border-radius:2px;"></div>
<svg class="r" style="left:1516px;top:1045.7px;overflow:visible" width="14" height="8" viewBox="0 0 14 8"><path d="M1 7.5 L7 1.5 L13 7.5" fill="none" stroke="#1a1a1a" stroke-width="1.6"/></svg>
<svg class="r" style="left:1552.5px;top:1040.4px;overflow:visible" width="21" height="20" viewBox="0 0 21 20"><path d="M3 9 Q3.5 2 10 1.8 Q15 1.8 17.5 5.5" fill="none" stroke="#1a1a1a" stroke-width="1.5"/><path d="M18 1.5 V6 H13.5" fill="none" stroke="#1a1a1a" stroke-width="1.5"/><path d="M17.5 11 Q17 18 10.5 18.3 Q5.5 18.3 3 14.5" fill="none" stroke="#1a1a1a" stroke-width="1.5"/><path d="M2.5 18.5 V14 H7" fill="none" stroke="#1a1a1a" stroke-width="1.5"/><circle cx="15.5" cy="14.1" r="4.6" fill="#f7930a"/></svg>
<svg class="r" style="left:1593px;top:1042.5px;overflow:visible" width="20.5" height="13.5" viewBox="0 0 20.5 13.5"><rect x="0.7" y="0.7" width="19" height="12" rx="1.8" fill="none" stroke="#1a1a1a" stroke-width="1.3"/><path d="M4 4 H5.5 M7.5 4 H9 M11 4 H12.5 M14.5 4 H16 M4 6.8 H5.5 M7.5 6.8 H9 M11 6.8 H12.5 M14.5 6.8 H16 M5 9.6 H15" stroke="#1a1a1a" stroke-width="1.2"/></svg>
<div class="t" style="left:1639.7px;top:1043.00px;font-size:15px;color:#1a1a1a;font-weight:400;font-style:normal;transform:scaleX(0.8398);">VIE</div>
<svg class="r" style="left:1688px;top:1042.5px;overflow:visible" width="20" height="14" viewBox="0 0 20 14"><path d="M1 5 Q10 -2.5 19 5" fill="none" stroke="#1a1a1a" stroke-width="1.7"/><path d="M4 8 Q10 3 16 8" fill="none" stroke="#1a1a1a" stroke-width="1.7"/><path d="M7 10.8 Q10 8.5 13 10.8" fill="none" stroke="#1a1a1a" stroke-width="1.7"/><circle cx="10" cy="13" r="1.4" fill="#1a1a1a"/></svg>
<svg class="r" style="left:1717.5px;top:1042px;overflow:visible" width="21" height="15" viewBox="0 0 21 15"><path d="M1 5 H4.5 L9.5 1 V14 L4.5 10 H1 Z" fill="none" stroke="#1a1a1a" stroke-width="1.4" stroke-linejoin="round"/><path d="M12 5 Q13.5 7.5 12 10" fill="none" stroke="#1a1a1a" stroke-width="1.4"/><path d="M14.3 3 Q17 7.5 14.3 12" fill="none" stroke="#1a1a1a" stroke-width="1.4"/><path d="M17 1.5 Q20.5 7.5 17 13.5" fill="none" stroke="#1a1a1a" stroke-width="1" opacity="0.25"/></svg>
<svg class="r" style="left:1748px;top:1044px;overflow:visible" width="20" height="12" viewBox="0 0 20 12"><rect x="0.7" y="0.7" width="16.5" height="10.6" rx="2.2" fill="none" stroke="#1a1a1a" stroke-width="1.4"/><rect x="2.6" y="2.6" width="9.5" height="6.8" rx="0.8" fill="#1a1a1a"/><path d="M18.3 4 V8" stroke="#1a1a1a" stroke-width="1.8" stroke-linecap="round"/></svg>
<div class="t" style="left:1810.3px;top:1032.00px;font-size:15px;color:#1a1a1a;font-weight:400;font-style:normal;transform:scaleX(0.9365);">17:51:41</div>
<div class="t" style="left:1789.2px;top:1052.00px;font-size:15px;color:#1a1a1a;font-weight:400;font-style:normal;transform:scaleX(1.0094);">15/10/2025</div>
<svg class="r" style="left:1876.7px;top:1040.8px;overflow:visible" width="18" height="19.5" viewBox="0 0 18 19.5"><path d="M9 3 Q3 3.5 3 9.5 V12.5 L1 15 H17 L15 12.5 V9.5 Q15 3.5 9 3Z" fill="#1a1a1a"/><path d="M6.5 16.5 Q9 19.5 11.5 16.5" fill="#1a1a1a"/><text x="8.5" y="12.5" font-family="Liberation Sans" font-weight="700" font-size="7" fill="#d0f0c8" text-anchor="middle">z</text><text x="15" y="5.5" font-family="Liberation Sans" font-weight="700" font-size="6.5" fill="#1a1a1a" text-anchor="middle">z</text></svg>
</body></html>
